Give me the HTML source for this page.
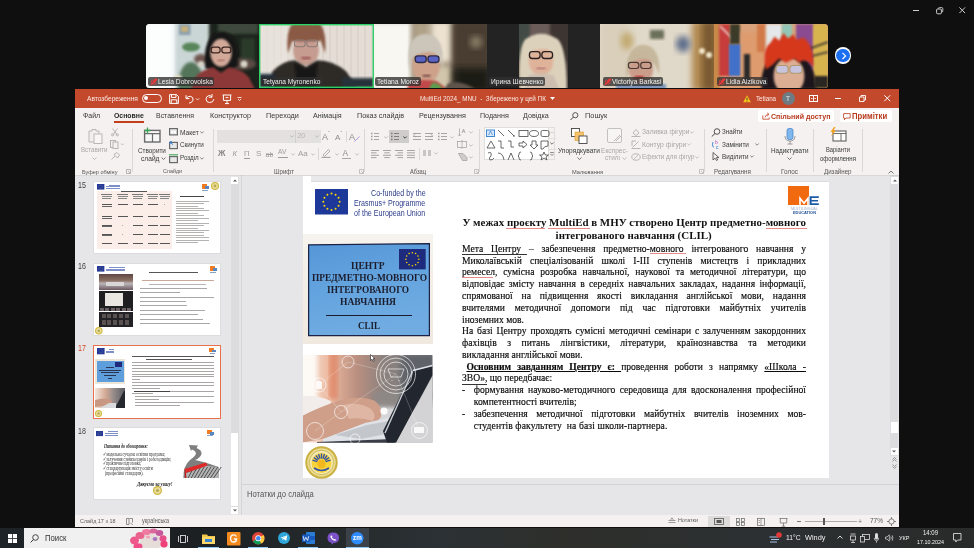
<!DOCTYPE html>
<html><head><meta charset="utf-8">
<style>
*{margin:0;padding:0;box-sizing:border-box}
html,body{width:974px;height:548px;overflow:hidden;background:#0f0f0f;font-family:"Liberation Sans",sans-serif;position:relative}
.a{position:absolute}
.t{position:absolute;white-space:pre;line-height:1}
svg{position:absolute;overflow:visible}
.sb{position:absolute;font-family:"Liberation Serif",serif;font-size:9.6px;line-height:9.6px;color:#0a0a0a;white-space:pre;-webkit-text-stroke:0.15px #0a0a0a}
.sb.j{white-space:normal;text-align:justify;text-align-last:justify;height:9.6px}
#wrap{position:absolute;left:0;top:0;width:974px;height:548px;overflow:hidden;filter:blur(0.3px)}

</style></head>
<body>
<div id="wrap">
<div class="a" style="left:912.8px;top:9.8px;width:5.8px;height:1.1px;background:#cfcfcf;"></div>
<svg style="left:935.5px;top:6.8px;" width="7.5" height="7.5" viewBox="0 0 7.5 7.5"><rect x="0.6" y="2" width="4.8" height="4.8" rx="1" stroke="#cfcfcf" stroke-width="1" fill="none"/><path d="M2.2 1.6 Q2.4 0.6 3.4 0.6 H5.8 Q6.8 0.6 6.8 1.6 V4 Q6.8 5 5.8 5.2" stroke="#cfcfcf" stroke-width="0.9" fill="none"/></svg>
<svg style="left:959px;top:7px;" width="6.5" height="6.5" viewBox="0 0 6.5 6.5"><path d="M0.4 0.4L6.1 6.1M6.1 0.4L0.4 6.1" stroke="#cfcfcf" stroke-width="1"/></svg>
<svg style="left:146px;top:24px;" width="682" height="64" viewBox="0 0 682 64"><defs><filter id="bl" x="-20%" y="-20%" width="140%" height="140%"><feGaussianBlur stdDeviation="1.6"/></filter><filter id="bl2" x="-20%" y="-20%" width="140%" height="140%"><feGaussianBlur stdDeviation="3"/></filter><filter id="bl1" x="-20%" y="-20%" width="140%" height="140%"><feGaussianBlur stdDeviation="0.8"/></filter><clipPath id="tc"><rect x="0" y="0" width="682" height="64" rx="3.5"/></clipPath><clipPath id="c1"><rect x="0" y="0" width="113" height="64"/></clipPath><clipPath id="c2"><rect x="113" y="0" width="115" height="64"/></clipPath><clipPath id="c3"><rect x="228" y="0" width="113" height="64"/></clipPath><clipPath id="c4"><rect x="373" y="0" width="49" height="64"/></clipPath><clipPath id="c5"><rect x="454" y="0" width="114" height="64"/></clipPath><clipPath id="c6"><rect x="568" y="0" width="114" height="64"/></clipPath></defs><g clip-path="url(#tc)"><g clip-path="url(#c1)"><rect x="0" y="0" width="113" height="64" fill="#c9d3d2"/><rect x="-4" y="-4" width="34" height="72" fill="#fcfefe" filter="url(#bl2)"/><rect x="30" y="-4" width="34" height="72" fill="#cad6d6" filter="url(#bl)"/><rect x="63" y="-4" width="54" height="72" fill="#1a241c" filter="url(#bl)"/><rect x="72" y="-2" width="40" height="12" fill="#3c4a3a" filter="url(#bl)"/><rect x="95" y="14" width="14" height="24" fill="#2c3a2a" filter="url(#bl)"/><rect x="33" y="0" width="11.5" height="11" fill="#8a9fb0" filter="url(#bl1)"/><rect x="35" y="2" width="7" height="6" fill="#c6b07a" filter="url(#bl1)"/><ellipse cx="45" cy="62" rx="13" ry="24" fill="#54745a" filter="url(#bl)"/><ellipse cx="45" cy="23" rx="9" ry="4.5" fill="#58865a" filter="url(#bl1)"/><ellipse cx="55" cy="35" rx="7" ry="5" fill="#6f5650" filter="url(#bl)"/><ellipse cx="32" cy="54" rx="4" ry="3" fill="#e8e0c8" filter="url(#bl1)"/><ellipse cx="96" cy="40" rx="14" ry="6" fill="#5a4b45" filter="url(#bl)"/><circle cx="98" cy="40" r="3.5" fill="#d8d4c6" filter="url(#bl1)"/><circle cx="55" cy="40" r="3" fill="#d8d4c6" filter="url(#bl1)"/><g transform="translate(75 40) scale(1.12) translate(-75 -40)"><path d="M61 44 Q58 14 75 11 Q92 12 90 42 Q84 46 75 44 Q66 46 61 44Z" fill="#151313" filter="url(#bl1)"/><ellipse cx="75" cy="30" rx="9.5" ry="12.5" fill="#d2a898" filter="url(#bl1)"/><rect x="66.2" y="25.0" width="8" height="5" rx="2.0" stroke="#3a2420" stroke-width="1.1" fill="none"/><rect x="75.8" y="25.0" width="8" height="5" rx="2.0" stroke="#3a2420" stroke-width="1.1" fill="none"/><rect x="72" y="36" width="6" height="1.2" fill="#9a5a58" filter="url(#bl1)"/><path d="M48 64 L52 52 Q58 45 68 43 L75 48 L82 43 Q94 45 100 52 L106 64 Z" fill="#8c3838" filter="url(#bl1)"/></g></g><g clip-path="url(#c2)"><rect x="113" y="0" width="115" height="64" fill="#e4ddd6"/><rect x="113" y="0" width="2" height="64" fill="#cdc4ba" opacity="0.3"/><rect x="120" y="0" width="2" height="64" fill="#cdc4ba" opacity="0.3"/><rect x="127" y="0" width="2" height="64" fill="#cdc4ba" opacity="0.3"/><rect x="134" y="0" width="2" height="64" fill="#cdc4ba" opacity="0.3"/><rect x="141" y="0" width="2" height="64" fill="#cdc4ba" opacity="0.3"/><rect x="148" y="0" width="2" height="64" fill="#cdc4ba" opacity="0.3"/><rect x="155" y="0" width="2" height="64" fill="#cdc4ba" opacity="0.3"/><rect x="162" y="0" width="2" height="64" fill="#cdc4ba" opacity="0.3"/><rect x="169" y="0" width="2" height="64" fill="#cdc4ba" opacity="0.3"/><rect x="176" y="0" width="2" height="64" fill="#cdc4ba" opacity="0.3"/><rect x="183" y="0" width="2" height="64" fill="#cdc4ba" opacity="0.3"/><rect x="190" y="0" width="2" height="64" fill="#cdc4ba" opacity="0.3"/><rect x="197" y="0" width="2" height="64" fill="#cdc4ba" opacity="0.3"/><rect x="204" y="0" width="2" height="64" fill="#cdc4ba" opacity="0.3"/><rect x="211" y="0" width="2" height="64" fill="#cdc4ba" opacity="0.3"/><rect x="218" y="0" width="2" height="64" fill="#cdc4ba" opacity="0.3"/><rect x="225" y="0" width="2" height="64" fill="#cdc4ba" opacity="0.3"/><rect x="113" y="-4" width="30" height="72" fill="#ebe6e0" filter="url(#bl)" opacity="0.6"/><g transform="translate(160 34) scale(1.12) translate(-160 -34)"><path d="M144 30 Q140 -2 160 -2 Q180 -2 177 30 L173 18 Q160 12 148 18Z" fill="#8a5a44" filter="url(#bl1)"/><ellipse cx="160" cy="27" rx="11.5" ry="14" fill="#c69c90" filter="url(#bl1)"/><rect x="147" y="11" width="26" height="8" fill="#8a5a44" filter="url(#bl1)"/><rect x="149.7" y="18.0" width="9.5" height="6" rx="2.4" stroke="#8b7a76" stroke-width="0.9" fill="none"/><rect x="160.8" y="18.0" width="9.5" height="6" rx="2.4" stroke="#8b7a76" stroke-width="0.9" fill="none"/><rect x="156" y="33" width="8" height="2.2" fill="#9c5454" filter="url(#bl1)"/><path d="M126 64 L130 46 Q140 36 150 36 L160 42 L170 36 Q184 36 196 46 L208 64 Z" fill="#2e2a28" filter="url(#bl1)"/><path d="M150 38 L160 44 L170 38 L168 64 L152 64Z" fill="#141212" filter="url(#bl1)"/></g><rect x="113" y="50" width="16" height="14" fill="#1f2a38" filter="url(#bl)"/><rect x="196" y="54" width="32" height="10" fill="#26303a" filter="url(#bl)"/><rect x="113.7" y="0.7" width="113.6" height="62.6" fill="none" stroke="#2fd067" stroke-width="1.4"/></g><g clip-path="url(#c3)"><rect x="228" y="0" width="113" height="64" fill="#5a4a3a"/><rect x="222" y="-4" width="46" height="72" fill="#f8f7f2" filter="url(#bl2)"/><rect x="266" y="-4" width="20" height="72" fill="#b0a288" filter="url(#bl2)"/><rect x="284" y="-4" width="24" height="44" fill="#ece2cf" filter="url(#bl2)"/><rect x="284" y="40" width="24" height="28" fill="#d2c6ac" filter="url(#bl2)"/><rect x="306" y="-4" width="40" height="72" fill="#4a3e30" filter="url(#bl2)"/><ellipse cx="330" cy="18" rx="6" ry="6" fill="#8a8068" filter="url(#bl2)"/><rect x="308" y="44" width="36" height="24" fill="#1e1a14" filter="url(#bl2)"/><g transform="translate(280 44) scale(1.1) translate(-280 -44)"><path d="M265 46 Q260 14 279 13 Q298 13 295 44 L292 34 Q280 26 268 34Z" fill="#cbc5ba" filter="url(#bl1)"/><ellipse cx="280" cy="42" rx="12.5" ry="16" fill="#cea28a" filter="url(#bl1)"/><path d="M266 32 Q272 18 292 26 L294 32 Q280 26 268 34Z" fill="#cbc5ba" filter="url(#bl1)"/><rect x="270.2" y="33.0" width="10" height="6" rx="2.4" stroke="#2b2a4a" stroke-width="1.2" fill="#5a62c4"/><rect x="281.8" y="33.0" width="10" height="6" rx="2.4" stroke="#2b2a4a" stroke-width="1.2" fill="#5a62c4"/><rect x="277" y="50" width="7" height="2" fill="#7a4a48" filter="url(#bl1)"/><path d="M262 64 L266 56 Q278 54 290 56 L300 64 Z" fill="#c24a4a" filter="url(#bl1)"/><path d="M282 64 L286 57 L292 59 L296 64Z" fill="#5aa050" filter="url(#bl1)"/><path d="M296 64 L300 58 Q312 54 326 64 Z" fill="#5e554c" filter="url(#bl1)"/></g></g><rect x="341" y="0" width="113" height="64" fill="#232323"/><g clip-path="url(#c4)"><rect x="373" y="0" width="49" height="64" fill="#4a403c"/><rect x="370" y="-3" width="16" height="40" fill="#424c44" filter="url(#bl)"/><rect x="384" y="-3" width="22" height="20" fill="#6a5c58" filter="url(#bl)"/><rect x="404" y="-3" width="22" height="40" fill="#3e3532" filter="url(#bl)"/><rect x="370" y="36" width="20" height="30" fill="#6a564c" filter="url(#bl)"/><g transform="translate(395 40) scale(1.12) translate(-395 -40)"><path d="M376 64 Q374 26 381 18 Q395 8 410 18 Q418 26 418 64Z" fill="#dcd2bc" filter="url(#bl1)"/><ellipse cx="395" cy="37" rx="11" ry="13.5" fill="#dfb29a" filter="url(#bl1)"/><path d="M382 30 Q385 16 395 16 Q407 16 410 30 Q398 23 382 30Z" fill="#dcd2bc" filter="url(#bl1)"/><rect x="384.7" y="28.9" width="9.5" height="6.2" rx="2.48" stroke="#2a201e" stroke-width="1.2" fill="none"/><rect x="395.8" y="28.9" width="9.5" height="6.2" rx="2.48" stroke="#2a201e" stroke-width="1.2" fill="none"/><rect x="391" y="43" width="8" height="1.6" fill="#b07070" filter="url(#bl1)"/><path d="M380 64 L384 50 Q395 47 406 50 L412 64 Z" fill="#cdbeb0" filter="url(#bl1)"/></g></g><g clip-path="url(#c5)"><rect x="454" y="0" width="114" height="64" fill="#e0d8c8"/><rect x="454" y="-3" width="30" height="70" fill="#d9cfbb" filter="url(#bl2)"/><rect x="546" y="-3" width="26" height="70" fill="#b08850" filter="url(#bl2)"/><rect x="556" y="-3" width="14" height="70" fill="#7a5a30" filter="url(#bl2)"/><ellipse cx="481" cy="17" rx="6.5" ry="9" fill="#c2aa72" filter="url(#bl2)"/><rect x="504" y="6" width="14" height="9" fill="#6b705a" filter="url(#bl)"/><ellipse cx="537" cy="20" rx="7" ry="8" fill="#5d6d8a" filter="url(#bl2)"/><circle cx="556" cy="27" r="3" fill="#f2e6c8" filter="url(#bl1)"/><circle cx="563" cy="31" r="3" fill="#f2e6c8" filter="url(#bl1)"/><g transform="translate(495 50) scale(1.22) translate(-495 -50)"><path d="M483 54 Q481 28 496 26 Q511 26 510 50 L506 42 Q495 36 487 42Z" fill="#c6b89c" filter="url(#bl1)"/><ellipse cx="495" cy="46" rx="10" ry="12" fill="#cc9c8a" filter="url(#bl1)"/><path d="M485 38 Q493 30 507 36 L507 40 Q495 34 485 42Z" fill="#c6b89c" filter="url(#bl1)"/><rect x="484.7" y="40.5" width="8.5" height="5" rx="2.0" stroke="#4a3a34" stroke-width="1" fill="none"/><rect x="494.8" y="40.5" width="8.5" height="5" rx="2.0" stroke="#4a3a34" stroke-width="1" fill="none"/><rect x="490" y="51.5" width="7" height="2.2" fill="#c03030" filter="url(#bl1)"/></g><rect x="470" y="60" width="50" height="5" fill="#7d96bd" filter="url(#bl1)"/></g><g clip-path="url(#c6)"><rect x="568" y="0" width="114" height="64" fill="#d9a27a"/><rect x="566" y="-3" width="8" height="70" fill="#c98a4a" filter="url(#bl1)"/><rect x="573" y="0" width="11" height="52" fill="#c63c3a" filter="url(#bl1)"/><path d="M574 2 L590 18" stroke="#f4f0e8" stroke-width="1.5" filter="url(#bl1)"/><rect x="583" y="20" width="12" height="32" fill="#3f70c8" filter="url(#bl1)"/><rect x="584" y="0" width="10" height="20" fill="#3a3a2a" filter="url(#bl1)"/><rect x="595" y="8" width="28" height="56" fill="#de9b6e" filter="url(#bl)"/><rect x="598" y="30" width="6" height="28" fill="#2a2a2a" filter="url(#bl1)"/><rect x="611" y="0" width="9" height="28" fill="#d27a48" filter="url(#bl1)"/><rect x="620" y="0" width="16" height="36" fill="#e4e8ea" filter="url(#bl)"/><rect x="636" y="0" width="10" height="16" fill="#92c6b6" filter="url(#bl1)"/><rect x="650" y="0" width="18" height="52" fill="#8a4c90" filter="url(#bl1)"/><rect x="667" y="0" width="15" height="64" fill="#d8b450" filter="url(#bl1)"/><path d="M660 26 L682 18 M658 34 L682 28" stroke="#2a2a2a" stroke-width="1.5" filter="url(#bl1)"/><g transform="translate(643 52) scale(1.1) translate(-643 -52)"><path d="M618 64 Q616 34 640 30 Q666 30 668 64Z" fill="#1a181a" filter="url(#bl1)"/><ellipse cx="643" cy="52" rx="14" ry="17" fill="#dcae94" filter="url(#bl1)"/><path d="M622 46 Q618 28 626 22 L630 16 L634 20 L638 13 L642 18 L647 14 L650 19 L656 17 Q666 24 665 44 L662 40 Q656 36 652 40 L648 36 L640 40 L634 36 L628 42 Z" fill="#d6391f" filter="url(#bl1)"/><rect x="631.2" y="42.5" width="11" height="7" rx="2.8" stroke="#b09a70" stroke-width="1" fill="#c8c4e0"/><rect x="643.8" y="42.5" width="11" height="7" rx="2.8" stroke="#b09a70" stroke-width="1" fill="#c8c4e0"/></g><rect x="668" y="52" width="14" height="12" fill="#2a2624" filter="url(#bl1)"/></g></g></svg>
<div class="a" style="left:148.3px;top:77.1px;width:65.69999999999999px;height:8.6px;background:rgba(48,48,48,0.78);border-radius:2px"></div>
<svg style="left:149.8px;top:77.9px;" width="8" height="7.5" viewBox="0 0 8 7.5"><g transform="rotate(38 4 3.6)"><rect x="2.7" y="0.2" width="2.8" height="4.6" rx="1.4" fill="#e5393b"/><path d="M1.5 3.2 Q1.5 6 4.1 6 Q6.7 6 6.7 3.2 M4.1 6 V7.4" stroke="#e5393b" stroke-width="0.9" fill="none"/></g><path d="M0.6 7 L7.4 0.4" stroke="#e5393b" stroke-width="1.1"/></svg>
<div class="t " style="left:157.50px;top:77.99px;font-size:8.023px;color:#f0f0f0;font-weight:normal;font-family:'Liberation Sans';transform:scaleX(0.8333);transform-origin:0 0;">Lesia Dobrovolska</div>
<div class="a" style="left:261.3px;top:77.1px;width:61.69999999999999px;height:8.6px;background:rgba(48,48,48,0.78);border-radius:2px"></div>
<div class="t " style="left:263.00px;top:78.05px;font-size:7.906px;color:#f0f0f0;font-weight:normal;font-family:'Liberation Sans';transform:scaleX(0.8333);transform-origin:0 0;">Tetyana Myronenko</div>
<div class="a" style="left:375.3px;top:77.1px;width:45.69999999999999px;height:8.6px;background:rgba(48,48,48,0.78);border-radius:2px"></div>
<div class="t " style="left:377.00px;top:77.99px;font-size:8.024px;color:#f0f0f0;font-weight:normal;font-family:'Liberation Sans';transform:scaleX(0.8333);transform-origin:0 0;">Tetiana Moroz</div>
<div class="a" style="left:488.7px;top:77.1px;width:56.00000000000006px;height:8.6px;background:rgba(48,48,48,0.78);border-radius:2px"></div>
<div class="t " style="left:490.50px;top:77.97px;font-size:8.063px;color:#f0f0f0;font-weight:normal;font-family:'Liberation Sans';transform:scaleX(0.8333);transform-origin:0 0;">Ирина Шевченко</div>
<div class="a" style="left:602.6px;top:77.1px;width:60.39999999999998px;height:8.6px;background:rgba(48,48,48,0.78);border-radius:2px"></div>
<svg style="left:604.1px;top:77.9px;" width="8" height="7.5" viewBox="0 0 8 7.5"><g transform="rotate(38 4 3.6)"><rect x="2.7" y="0.2" width="2.8" height="4.6" rx="1.4" fill="#e5393b"/><path d="M1.5 3.2 Q1.5 6 4.1 6 Q6.7 6 6.7 3.2 M4.1 6 V7.4" stroke="#e5393b" stroke-width="0.9" fill="none"/></g><path d="M0.6 7 L7.4 0.4" stroke="#e5393b" stroke-width="1.1"/></svg>
<div class="t " style="left:612.00px;top:78.00px;font-size:7.996px;color:#f0f0f0;font-weight:normal;font-family:'Liberation Sans';transform:scaleX(0.8333);transform-origin:0 0;">Victoriya Barkasi</div>
<div class="a" style="left:716.5px;top:77.1px;width:51.5px;height:8.6px;background:rgba(48,48,48,0.78);border-radius:2px"></div>
<svg style="left:718.0px;top:77.9px;" width="8" height="7.5" viewBox="0 0 8 7.5"><g transform="rotate(38 4 3.6)"><rect x="2.7" y="0.2" width="2.8" height="4.6" rx="1.4" fill="#e5393b"/><path d="M1.5 3.2 Q1.5 6 4.1 6 Q6.7 6 6.7 3.2 M4.1 6 V7.4" stroke="#e5393b" stroke-width="0.9" fill="none"/></g><path d="M0.6 7 L7.4 0.4" stroke="#e5393b" stroke-width="1.1"/></svg>
<div class="t " style="left:725.50px;top:77.99px;font-size:8.021px;color:#f0f0f0;font-weight:normal;font-family:'Liberation Sans';transform:scaleX(0.8333);transform-origin:0 0;">Lidia Aizikova</div>
<div class="a" style="left:834.8px;top:47.2px;width:16.4px;height:16.4px;border-radius:50%;background:#fff"></div>
<div class="a" style="left:836.3px;top:48.7px;width:13.4px;height:13.4px;border-radius:50%;background:#1b6ff0"></div>
<svg style="left:840.5px;top:51.5px;" width="6" height="8" viewBox="0 0 6 8"><path d="M1.5 0.8L4.6 3.9L1.5 7" stroke="#fff" stroke-width="1.2" fill="none"/></svg>
<div class="a" style="left:75px;top:89px;width:824px;height:18.5px;background:#c2492b;"></div>
<div class="t " style="left:87.00px;top:94.96px;font-size:7.281px;color:#fbe9e4;font-weight:normal;font-family:'Liberation Sans';transform:scaleX(0.9091);transform-origin:0 0;">Автозбереження</div>
<div class="a" style="left:141.5px;top:94px;width:20.5px;height:8.5px;border:1px solid #fff;border-radius:5px"></div>
<div class="a" style="left:144px;top:96.3px;width:4px;height:4px;border-radius:50%;background:#fff"></div>
<svg style="left:169px;top:93.5px;" width="10" height="10" viewBox="0 0 10 10"><path d="M0.6 0.6H7.6L9.4 2.4V9.4H0.6Z M2.5 0.6V3.4H7V0.6 M2.2 9.4V5.8H7.8V9.4" stroke="#fff" stroke-width="1" fill="none"/></svg>
<svg style="left:184px;top:93.5px;" width="16" height="10" viewBox="0 0 16 10"><path d="M2 1.2V4.6H5.4 M2.2 4.4 Q4 1.8 6.8 2.4 Q9.6 3.2 9 6.2 Q8.4 8.6 5 9.2" stroke="#fff" stroke-width="1" fill="none"/><path d="M12 4.4L13.6 6L15.2 4.4" stroke="#fff" stroke-width="0.8" fill="none"/></svg>
<svg style="left:204.5px;top:93px;" width="10" height="11" viewBox="0 0 10 11"><path d="M7 1V4.2H3.8 M6.8 3.8 Q5.4 2.2 3.8 2.6 Q1 3.4 1 6.2 Q1.2 9.4 4.6 9.6 Q8.4 9.6 8.8 6.2" stroke="#fff" stroke-width="1" fill="none"/></svg>
<svg style="left:222px;top:93.5px;" width="10" height="10" viewBox="0 0 10 10"><path d="M0.6 1H9.4 M1.4 1V6.4H8.6V1 M5 6.4V9.6 M3 9.6H7 M3.6 3.6H6.4" stroke="#fff" stroke-width="1" fill="none"/></svg>
<svg style="left:237px;top:96.5px;" width="5" height="4" viewBox="0 0 5 4"><path d="M0.5 0.5H4.5 M1 2L2.5 3.5L4 2" stroke="#fff" stroke-width="0.8" fill="none"/></svg>
<div class="t " style="left:420.20px;top:94.91px;font-size:6.984px;color:#fbe9e4;font-weight:normal;font-family:'Liberation Sans';transform:scaleX(0.9091);transform-origin:0 0;">MultiEd 2024_ MNU  -  Збережено у цей ПК</div>
<svg style="left:550px;top:96.8px;" width="5" height="3" viewBox="0 0 5 3"><path d="M0 0H5L2.5 3Z" fill="#fff"/></svg>
<svg style="left:743px;top:94.5px;" width="8" height="7.5" viewBox="0 0 8 7.5"><path d="M4 0.3L7.8 7.2H0.2Z" fill="#f8c21c"/><path d="M4 2.6V5 M4 5.8V6.6" stroke="#333" stroke-width="0.9"/></svg>
<div class="t " style="left:755.70px;top:95.92px;font-size:7.168px;color:#fbeae6;font-weight:normal;font-family:'Liberation Sans';transform:scaleX(0.8696);transform-origin:0 0;">Tetiana</div>
<div class="a" style="left:781.5px;top:92px;width:13px;height:13px;border-radius:50%;background:#6d7c84"></div>
<div class="t " style="left:786.00px;top:95.65px;font-size:6.500px;color:#e8eef2;font-weight:normal;font-family:'Liberation Sans';">T</div>
<svg style="left:809px;top:95px;" width="9" height="7" viewBox="0 0 9 7"><rect x="0.5" y="0.5" width="8" height="6" stroke="#fff" stroke-width="1" fill="none"/><path d="M4.5 0.5V6.5 M2 3.5H3.5 M5.5 3.5H7" stroke="#fff" stroke-width="0.9"/></svg>
<div class="a" style="left:834.6px;top:98.3px;width:6.4px;height:1px;background:#fff;"></div>
<svg style="left:858.5px;top:94.8px;" width="7" height="7" viewBox="0 0 7 7"><path d="M0.5 2H5V6.5H0.5Z M2 2V0.5H6.5V5H5" stroke="#fff" stroke-width="0.9" fill="none"/></svg>
<svg style="left:883.8px;top:95.2px;" width="6.5" height="6.5" viewBox="0 0 6.5 6.5"><path d="M0.3 0.3L6.2 6.2M6.2 0.3L0.3 6.2" stroke="#fff" stroke-width="1"/></svg>
<div class="a" style="left:75px;top:107.5px;width:824px;height:17px;background:#f4f1f0;"></div>
<div class="t " style="left:82.80px;top:112.35px;font-size:7.695px;color:#3a3a3a;font-weight:normal;font-family:'Liberation Sans';transform:scaleX(0.9091);transform-origin:0 0;">Файл</div>
<div class="t " style="left:114.00px;top:112.41px;font-size:7.581px;color:#262626;font-weight:bold;font-family:'Liberation Sans';transform:scaleX(0.9091);transform-origin:0 0;">Основне</div>
<div class="a" style="left:113.7px;top:121.4px;width:30.3px;height:1.6px;background:#c43e1c;"></div>
<div class="t " style="left:156.00px;top:112.37px;font-size:7.650px;color:#3a3a3a;font-weight:normal;font-family:'Liberation Sans';transform:scaleX(0.9091);transform-origin:0 0;">Вставлення</div>
<div class="t " style="left:209.50px;top:112.24px;font-size:7.929px;color:#3a3a3a;font-weight:normal;font-family:'Liberation Sans';transform:scaleX(0.9091);transform-origin:0 0;">Конструктор</div>
<div class="t " style="left:266.00px;top:112.21px;font-size:7.988px;color:#3a3a3a;font-weight:normal;font-family:'Liberation Sans';transform:scaleX(0.9091);transform-origin:0 0;">Переходи</div>
<div class="t " style="left:313.20px;top:112.26px;font-size:7.878px;color:#3a3a3a;font-weight:normal;font-family:'Liberation Sans';transform:scaleX(0.9091);transform-origin:0 0;">Анімація</div>
<div class="t " style="left:357.30px;top:112.24px;font-size:7.926px;color:#3a3a3a;font-weight:normal;font-family:'Liberation Sans';transform:scaleX(0.9091);transform-origin:0 0;">Показ слайдів</div>
<div class="t " style="left:419.00px;top:112.24px;font-size:7.914px;color:#3a3a3a;font-weight:normal;font-family:'Liberation Sans';transform:scaleX(0.9091);transform-origin:0 0;">Рецензування</div>
<div class="t " style="left:479.80px;top:112.28px;font-size:7.844px;color:#3a3a3a;font-weight:normal;font-family:'Liberation Sans';transform:scaleX(0.9091);transform-origin:0 0;">Подання</div>
<div class="t " style="left:523.00px;top:112.26px;font-size:7.889px;color:#3a3a3a;font-weight:normal;font-family:'Liberation Sans';transform:scaleX(0.9091);transform-origin:0 0;">Довідка</div>
<svg style="left:569.8px;top:112px;" width="8.5" height="8.5" viewBox="0 0 8.5 8.5"><circle cx="5.3" cy="3.2" r="2.6" stroke="#444" stroke-width="0.9" fill="none"/><path d="M3.4 5.1L0.5 8" stroke="#444" stroke-width="1"/></svg>
<div class="t " style="left:584.60px;top:112.15px;font-size:8.100px;color:#3a3a3a;font-weight:normal;font-family:'Liberation Sans';transform:scaleX(0.9091);transform-origin:0 0;">Пошук</div>
<div class="a" style="left:758px;top:109.9px;width:76px;height:11.7px;background:#fff;border-radius:2px"></div>
<svg style="left:761.5px;top:112px;" width="8" height="8" viewBox="0 0 8 8"><path d="M0.8 3.4V7.2H7.2V5.4 M3 5.4Q3.4 2.6 6.6 2.4 M5.2 0.8L7 2.4L5.2 4" stroke="#c43e1c" stroke-width="0.8" fill="none"/></svg>
<div class="t " style="left:771.00px;top:112.72px;font-size:7.765px;color:#b8391c;font-weight:bold;font-family:'Liberation Sans';transform:scaleX(0.9091);transform-origin:0 0;">Спільний доступ</div>
<div class="a" style="left:839.6px;top:109.9px;width:52.5px;height:11.7px;background:#fff;border-radius:2px"></div>
<svg style="left:843px;top:112.5px;" width="8" height="7.5" viewBox="0 0 8 7.5"><path d="M0.6 0.6H7.2V5H3L1.4 6.8V5H0.6Z" stroke="#b8391c" stroke-width="0.8" fill="none"/></svg>
<div class="t " style="left:852.30px;top:112.36px;font-size:8.478px;color:#b8391c;font-weight:bold;font-family:'Liberation Sans';transform:scaleX(0.9091);transform-origin:0 0;">Примітки</div>
<div class="a" style="left:75px;top:124.5px;width:824px;height:50.3px;background:#f4f1f0;"></div>
<div class="a" style="left:75px;top:174.6px;width:824px;height:0.8px;background:#d8d6d4;"></div>
<div class="a" style="left:132px;top:129px;width:0.8px;height:43px;background:#dad8d6;"></div>
<div class="a" style="left:212.5px;top:129px;width:0.8px;height:43px;background:#dad8d6;"></div>
<div class="a" style="left:364.4px;top:129px;width:0.8px;height:43px;background:#dad8d6;"></div>
<div class="a" style="left:479px;top:129px;width:0.8px;height:43px;background:#dad8d6;"></div>
<div class="a" style="left:704px;top:129px;width:0.8px;height:43px;background:#dad8d6;"></div>
<div class="a" style="left:765.7px;top:129px;width:0.8px;height:43px;background:#dad8d6;"></div>
<div class="a" style="left:813.3px;top:129px;width:0.8px;height:43px;background:#dad8d6;"></div>
<div class="a" style="left:862px;top:129px;width:0.8px;height:43px;background:#dad8d6;"></div>
<svg style="left:86.5px;top:127.5px;" width="16" height="16" viewBox="0 0 16 16"><path d="M2 3H5V1.5H9V3H12V14H2Z" stroke="#b9b7b5" stroke-width="1" fill="#f0efee"/><rect x="7" y="6" width="8" height="9.5" stroke="#b9b7b5" stroke-width="1" fill="#f7f6f5"/></svg>
<div class="t " style="left:80.50px;top:147.19px;font-size:6.816px;color:#a9a7a5;font-weight:normal;font-family:'Liberation Sans';transform:scaleX(0.9091);transform-origin:0 0;">Вставити</div>
<svg style="left:92.3px;top:156.5px;" width="5" height="3" viewBox="0 0 5 3"><path d="M0.5 0.5L2.5 2.5L4.5 0.5" stroke="#b0aeac" stroke-width="0.8" fill="none"/></svg>
<svg style="left:111px;top:128px;" width="8" height="8" viewBox="0 0 8 8"><path d="M1.5 0.5L6.5 7.5M6.5 0.5L1.5 7.5" stroke="#b0aeac" stroke-width="0.9" fill="none"/><circle cx="1.6" cy="6.8" r="1.2" stroke="#b0aeac" stroke-width="0.7" fill="none"/><circle cx="6.4" cy="6.8" r="1.2" stroke="#b0aeac" stroke-width="0.7" fill="none"/></svg>
<svg style="left:110px;top:139.5px;" width="15" height="9" viewBox="0 0 15 9"><rect x="0.5" y="0.5" width="5" height="7" stroke="#b0aeac" stroke-width="0.9" fill="none"/><rect x="3" y="2" width="5" height="6.5" stroke="#b0aeac" stroke-width="0.9" fill="#f3f2f1"/><path d="M11 3.5L12.5 5L14 3.5" stroke="#b0aeac" stroke-width="0.7" fill="none"/></svg>
<svg style="left:110.5px;top:151.5px;" width="9" height="8" viewBox="0 0 9 8"><path d="M0.5 7.5L4 4 M3 2.5L6 0.5L8.5 3L6.5 6Z" stroke="#b0aeac" stroke-width="0.9" fill="none"/></svg>
<div class="t " style="left:81.50px;top:168.95px;font-size:6.097px;color:#555555;font-weight:normal;font-family:'Liberation Sans';transform:scaleX(0.9091);transform-origin:0 0;">Буфер обміну</div>
<svg style="left:126px;top:168.5px;" width="5" height="5" viewBox="0 0 5 5"><path d="M0.5 0.5H4.5V4.5H0.5Z M2 2L4.3 4.3" stroke="#8d8b89" stroke-width="0.6" fill="none"/></svg>
<svg style="left:143px;top:126.5px;" width="18" height="16" viewBox="0 0 18 16"><rect x="1.6" y="3.4" width="15.4" height="11.6" stroke="#6a6a6a" stroke-width="1.4" fill="#f7f7f7"/><path d="M1.6 6.6H17 M9.5 6.6V15" stroke="#6a6a6a" stroke-width="1.2"/><path d="M4.5 0.5V6.5 M1.5 3.5H7.5" stroke="#3aa655" stroke-width="1.3"/></svg>
<div class="t " style="left:138.00px;top:147.09px;font-size:7.019px;color:#3a3a3a;font-weight:normal;font-family:'Liberation Sans';transform:scaleX(0.9091);transform-origin:0 0;">Створити</div>
<div class="t " style="left:140.50px;top:155.34px;font-size:7.315px;color:#3a3a3a;font-weight:normal;font-family:'Liberation Sans';transform:scaleX(0.9091);transform-origin:0 0;">слайд</div>
<svg style="left:160.5px;top:157.3px;" width="5" height="3" viewBox="0 0 5 3"><path d="M0.5 0.5L2.5 2.5L4.5 0.5" stroke="#555" stroke-width="0.8" fill="none"/></svg>
<svg style="left:169px;top:128.3px;" width="9" height="7.5" viewBox="0 0 9 7.5"><rect x="0.6" y="0.6" width="7.8" height="6.3" stroke="#6a6a6a" stroke-width="1.2" fill="#e8e8e8"/><rect x="2" y="3" width="2.2" height="2.2" fill="#fff"/><rect x="4.8" y="3" width="2.2" height="2.2" fill="#fff"/></svg>
<div class="t " style="left:179.70px;top:128.75px;font-size:7.307px;color:#3a3a3a;font-weight:normal;font-family:'Liberation Sans';transform:scaleX(0.9091);transform-origin:0 0;">Макет</div>
<svg style="left:200px;top:131.3px;" width="4" height="3" viewBox="0 0 4 3"><path d="M0.3 0.5L2 2.2L3.7 0.5" stroke="#555" stroke-width="0.7" fill="none"/></svg>
<svg style="left:169px;top:140.8px;" width="9" height="8" viewBox="0 0 9 8"><rect x="0.6" y="1.4" width="7.8" height="6.2" stroke="#6a6a6a" stroke-width="1.2" fill="#e8e8e8"/><path d="M1.2 1.2L4 3.6 M1 0.8V2.8 M1 0.8H3" stroke="#2a7ad1" stroke-width="1" fill="none"/></svg>
<div class="t " style="left:179.70px;top:142.14px;font-size:6.913px;color:#3a3a3a;font-weight:normal;font-family:'Liberation Sans';transform:scaleX(0.9091);transform-origin:0 0;">Скинути</div>
<svg style="left:169px;top:154px;" width="9" height="9" viewBox="0 0 9 9"><rect x="0.6" y="2.6" width="7.8" height="6" stroke="#6a6a6a" stroke-width="1.2" fill="#e8e8e8"/><path d="M0 0.8H9" stroke="#3aa655" stroke-width="1.1"/></svg>
<div class="t " style="left:179.70px;top:155.45px;font-size:6.908px;color:#3a3a3a;font-weight:normal;font-family:'Liberation Sans';transform:scaleX(0.9091);transform-origin:0 0;">Розділ</div>
<svg style="left:200px;top:157px;" width="4" height="3" viewBox="0 0 4 3"><path d="M0.3 0.5L2 2.2L3.7 0.5" stroke="#555" stroke-width="0.7" fill="none"/></svg>
<div class="t " style="left:163.00px;top:169.07px;font-size:5.867px;color:#555555;font-weight:normal;font-family:'Liberation Sans';transform:scaleX(0.9091);transform-origin:0 0;">Слайди</div>
<div class="a" style="left:216.6px;top:130px;width:79px;height:12.7px;background:#e2e1e0;"></div>
<div class="a" style="left:296px;top:130px;width:24.6px;height:12.7px;background:#e2e1e0;"></div>
<div class="a" style="left:295.4px;top:130px;width:0.8px;height:12.7px;background:#d0cfce;"></div>
<svg style="left:290px;top:135.3px;" width="4" height="3" viewBox="0 0 4 3"><path d="M0.3 0.5L2 2.2L3.7 0.5" stroke="#aaa" stroke-width="0.7" fill="none"/></svg>
<div class="t " style="left:297.50px;top:133.40px;font-size:6.800px;color:#b5b3b1;font-weight:normal;font-family:'Liberation Sans';">20</div>
<svg style="left:315px;top:135.3px;" width="4" height="3" viewBox="0 0 4 3"><path d="M0.3 0.5L2 2.2L3.7 0.5" stroke="#aaa" stroke-width="0.7" fill="none"/></svg>
<div class="t " style="left:322.00px;top:132.50px;font-size:9.000px;color:#8e8c8a;font-weight:normal;font-family:'Liberation Sans';">A</div>
<div class="t " style="left:328.00px;top:131.40px;font-size:5.000px;color:#8e8c8a;font-weight:normal;font-family:'Liberation Sans';">ˆ</div>
<div class="t " style="left:335.00px;top:133.70px;font-size:8.000px;color:#8e8c8a;font-weight:normal;font-family:'Liberation Sans';">A</div>
<div class="t " style="left:340.60px;top:131.40px;font-size:5.000px;color:#8e8c8a;font-weight:normal;font-family:'Liberation Sans';">ˇ</div>
<div class="a" style="left:346px;top:131px;width:0.7px;height:11px;background:#dad8d6;"></div>
<div class="t " style="left:349.00px;top:132.50px;font-size:9.000px;color:#8e8c8a;font-weight:normal;font-family:'Liberation Sans';">A</div>
<svg style="left:354px;top:136px;" width="6" height="6" viewBox="0 0 6 6"><path d="M0.5 5.5L3 3L5.5 0.5" stroke="#a57dd6" stroke-width="0.8" fill="none"/></svg>
<div class="t " style="left:218.00px;top:150.00px;font-size:8.200px;color:#8a8886;font-weight:bold;font-family:'Liberation Sans';">Ж</div>
<div class="t " style="left:232.50px;top:150.30px;font-size:7.600px;color:#9e9c9a;font-weight:normal;font-family:'Liberation Sans';font-style:italic;">К</div>
<div class="t " style="left:244.00px;top:150.30px;font-size:7.600px;color:#9e9c9a;font-weight:normal;font-family:'Liberation Sans';">П</div>
<div class="a" style="left:244px;top:157.8px;width:5.5px;height:0.7px;background:#9e9c9a;"></div>
<div class="t " style="left:256.00px;top:150.10px;font-size:8.000px;color:#9e9c9a;font-weight:normal;font-family:'Liberation Sans';">S</div>
<div class="t " style="left:265.50px;top:151.10px;font-size:7.000px;color:#9e9c9a;font-weight:normal;font-family:'Liberation Sans';">ab</div>
<div class="a" style="left:265.5px;top:154.2px;width:7.5px;height:0.7px;background:#9e9c9a;"></div>
<div class="t " style="left:278.00px;top:149.30px;font-size:6.600px;color:#9e9c9a;font-weight:normal;font-family:'Liberation Sans';">AV</div>
<div class="a" style="left:278px;top:157.2px;width:10px;height:0.6px;background:#9e9c9a;"></div>
<svg style="left:290.5px;top:153.2px;" width="4" height="3" viewBox="0 0 4 3"><path d="M0.3 0.5L2 2.2L3.7 0.5" stroke="#aaa" stroke-width="0.7" fill="none"/></svg>
<div class="t " style="left:298.00px;top:150.10px;font-size:8.000px;color:#9e9c9a;font-weight:normal;font-family:'Liberation Sans';">Aa</div>
<svg style="left:310.5px;top:153.2px;" width="4" height="3" viewBox="0 0 4 3"><path d="M0.3 0.5L2 2.2L3.7 0.5" stroke="#aaa" stroke-width="0.7" fill="none"/></svg>
<div class="a" style="left:318px;top:148px;width:0.7px;height:12px;background:#dad8d6;"></div>
<svg style="left:321px;top:148px;" width="10" height="10" viewBox="0 0 10 10"><path d="M2 7L7.5 1.5L9 3L3.5 8.5Z" stroke="#9e9c9a" stroke-width="0.8" fill="none"/><rect x="0.5" y="8.8" width="9" height="1.2" fill="#a9a7a5"/></svg>
<svg style="left:335px;top:153.2px;" width="4" height="3" viewBox="0 0 4 3"><path d="M0.3 0.5L2 2.2L3.7 0.5" stroke="#aaa" stroke-width="0.7" fill="none"/></svg>
<div class="t " style="left:342.50px;top:149.20px;font-size:8.400px;color:#8e8c8a;font-weight:normal;font-family:'Liberation Sans';">A</div>
<div class="a" style="left:342px;top:158px;width:9px;height:1.2px;background:#a9a7a5;"></div>
<svg style="left:355px;top:153.2px;" width="4" height="3" viewBox="0 0 4 3"><path d="M0.3 0.5L2 2.2L3.7 0.5" stroke="#aaa" stroke-width="0.7" fill="none"/></svg>
<div class="t " style="left:274.00px;top:168.66px;font-size:6.687px;color:#555555;font-weight:normal;font-family:'Liberation Sans';transform:scaleX(0.9091);transform-origin:0 0;">Шрифт</div>
<svg style="left:358.5px;top:168.5px;" width="5" height="5" viewBox="0 0 5 5"><path d="M0.5 0.5H4.5V4.5H0.5Z M2 2L4.3 4.3" stroke="#a3a19f" stroke-width="0.6" fill="none"/></svg>
<svg style="left:371px;top:132.5px;" width="8" height="9" viewBox="0 0 8 9"><rect x="3" y="0" width="5" height="0.9" fill="#9e9c9a"/><rect x="0" y="-0.3" width="1.5" height="1.5" fill="#9e9c9a"/><rect x="3" y="3" width="5" height="0.9" fill="#9e9c9a"/><rect x="0" y="2.7" width="1.5" height="1.5" fill="#9e9c9a"/><rect x="3" y="6" width="5" height="0.9" fill="#9e9c9a"/><rect x="0" y="5.7" width="1.5" height="1.5" fill="#9e9c9a"/></svg>
<svg style="left:383.5px;top:135.5px;" width="4" height="3" viewBox="0 0 4 3"><path d="M0.3 0.5L2 2.2L3.7 0.5" stroke="#aaa" stroke-width="0.7" fill="none"/></svg>
<div class="a" style="left:389px;top:130.4px;width:20px;height:12.3px;background:#cfcdcb;"></div>
<svg style="left:391px;top:132.5px;" width="8" height="9" viewBox="0 0 8 9"><rect x="3" y="0" width="5" height="0.9" fill="#7a7876"/><rect x="0" y="-0.3" width="1.5" height="1.5" fill="#7a7876"/><rect x="3" y="3" width="5" height="0.9" fill="#7a7876"/><rect x="0" y="2.7" width="1.5" height="1.5" fill="#7a7876"/><rect x="3" y="6" width="5" height="0.9" fill="#7a7876"/><rect x="0" y="5.7" width="1.5" height="1.5" fill="#7a7876"/></svg>
<svg style="left:403px;top:135.5px;" width="4" height="3" viewBox="0 0 4 3"><path d="M0.3 0.5L2 2.2L3.7 0.5" stroke="#333" stroke-width="0.9" fill="none"/></svg>
<svg style="left:413px;top:132.5px;" width="8" height="9" viewBox="0 0 8 9"><rect x="0" y="0" width="8" height="0.9" fill="#9e9c9a"/><rect x="0" y="3" width="8" height="0.9" fill="#9e9c9a"/><rect x="0" y="6" width="8" height="0.9" fill="#9e9c9a"/></svg>
<svg style="left:425px;top:132.5px;" width="8" height="9" viewBox="0 0 8 9"><rect x="0" y="0" width="8" height="0.9" fill="#9e9c9a"/><rect x="0" y="3" width="8" height="0.9" fill="#9e9c9a"/><rect x="0" y="6" width="8" height="0.9" fill="#9e9c9a"/></svg>
<svg style="left:413px;top:134px;" width="3" height="3" viewBox="0 0 3 3"><path d="M2.5 0L0.5 1.5L2.5 3" stroke="#9e9c9a" stroke-width="0.6" fill="none"/></svg>
<svg style="left:429.5px;top:134px;" width="3" height="3" viewBox="0 0 3 3"><path d="M0.5 0L2.5 1.5L0.5 3" stroke="#9e9c9a" stroke-width="0.6" fill="none"/></svg>
<svg style="left:438px;top:132.5px;" width="9" height="9" viewBox="0 0 9 9"><rect x="3" y="0" width="6" height="0.9" fill="#9e9c9a"/><rect x="0" y="-0.3" width="1.5" height="1.5" fill="#9e9c9a"/><rect x="3" y="3" width="6" height="0.9" fill="#9e9c9a"/><rect x="0" y="2.7" width="1.5" height="1.5" fill="#9e9c9a"/><rect x="3" y="6" width="6" height="0.9" fill="#9e9c9a"/><rect x="0" y="5.7" width="1.5" height="1.5" fill="#9e9c9a"/></svg>
<svg style="left:450px;top:135.5px;" width="4" height="3" viewBox="0 0 4 3"><path d="M0.3 0.5L2 2.2L3.7 0.5" stroke="#aaa" stroke-width="0.7" fill="none"/></svg>
<svg style="left:458px;top:127.5px;" width="9" height="9" viewBox="0 0 9 9"><path d="M1.5 0.5V8 M0 6.5L1.5 8L3 6.5 M5.5 1L7 5 M5.5 1L4 5 M4.5 3.5H6.5" stroke="#9e9c9a" stroke-width="0.7" fill="none"/></svg>
<svg style="left:469px;top:131px;" width="4" height="3" viewBox="0 0 4 3"><path d="M0.3 0.5L2 2.2L3.7 0.5" stroke="#aaa" stroke-width="0.7" fill="none"/></svg>
<svg style="left:457px;top:140px;" width="10" height="9" viewBox="0 0 10 9"><rect x="0.5" y="1.5" width="9" height="6" stroke="#9e9c9a" stroke-width="0.7" fill="none"/><path d="M5 0V9" stroke="#9e9c9a" stroke-width="0.6"/></svg>
<svg style="left:469px;top:144px;" width="4" height="3" viewBox="0 0 4 3"><path d="M0.3 0.5L2 2.2L3.7 0.5" stroke="#aaa" stroke-width="0.7" fill="none"/></svg>
<svg style="left:458px;top:152.5px;" width="10" height="8" viewBox="0 0 10 8"><path d="M0.5 0.5H5L9 4.5V7.5H4.5Z" stroke="#9e9c9a" stroke-width="0.7" fill="#cfcdcb"/></svg>
<svg style="left:469px;top:156px;" width="4" height="3" viewBox="0 0 4 3"><path d="M0.3 0.5L2 2.2L3.7 0.5" stroke="#aaa" stroke-width="0.7" fill="none"/></svg>
<svg style="left:371px;top:150px;" width="8" height="9.6" viewBox="0 0 8 9.6"><rect x="0" y="0.0" width="8" height="0.9" fill="#9e9c9a"/><rect x="0" y="2.4" width="5.5" height="0.9" fill="#9e9c9a"/><rect x="0" y="4.8" width="8" height="0.9" fill="#9e9c9a"/><rect x="0" y="7.199999999999999" width="5.5" height="0.9" fill="#9e9c9a"/></svg>
<svg style="left:383px;top:150px;" width="8" height="9.6" viewBox="0 0 8 9.6"><rect x="0.0" y="0.0" width="8" height="0.9" fill="#9e9c9a"/><rect x="1.25" y="2.4" width="5.5" height="0.9" fill="#9e9c9a"/><rect x="0.0" y="4.8" width="8" height="0.9" fill="#9e9c9a"/><rect x="1.25" y="7.199999999999999" width="5.5" height="0.9" fill="#9e9c9a"/></svg>
<svg style="left:395px;top:150px;" width="8" height="9.6" viewBox="0 0 8 9.6"><rect x="0" y="0.0" width="8" height="0.9" fill="#9e9c9a"/><rect x="2.5" y="2.4" width="5.5" height="0.9" fill="#9e9c9a"/><rect x="0" y="4.8" width="8" height="0.9" fill="#9e9c9a"/><rect x="2.5" y="7.199999999999999" width="5.5" height="0.9" fill="#9e9c9a"/></svg>
<svg style="left:407px;top:150px;" width="8" height="9.6" viewBox="0 0 8 9.6"><rect x="0" y="0.0" width="8" height="0.9" fill="#9e9c9a"/><rect x="0" y="2.4" width="8" height="0.9" fill="#9e9c9a"/><rect x="0" y="4.8" width="8" height="0.9" fill="#9e9c9a"/><rect x="0" y="7.199999999999999" width="8" height="0.9" fill="#9e9c9a"/></svg>
<div class="a" style="left:419px;top:148px;width:0.7px;height:12px;background:#dad8d6;"></div>
<svg style="left:423px;top:150px;" width="8" height="6" viewBox="0 0 8 6"><rect x="0" y="0" width="3" height="6" fill="#c8c6c4"/><rect x="5" y="0" width="3" height="6" fill="#c8c6c4"/></svg>
<svg style="left:434px;top:152px;" width="4" height="3" viewBox="0 0 4 3"><path d="M0.3 0.5L2 2.2L3.7 0.5" stroke="#aaa" stroke-width="0.7" fill="none"/></svg>
<div class="t " style="left:409.50px;top:168.86px;font-size:6.274px;color:#555555;font-weight:normal;font-family:'Liberation Sans';transform:scaleX(0.9091);transform-origin:0 0;">Абзац</div>
<svg style="left:473.5px;top:168.5px;" width="5" height="5" viewBox="0 0 5 5"><path d="M0.5 0.5H4.5V4.5H0.5Z M2 2L4.3 4.3" stroke="#a3a19f" stroke-width="0.6" fill="none"/></svg>
<div class="a" style="left:484.4px;top:127.4px;width:63.3px;height:32.6px;background:#ffffff;"></div>
<div class="a" style="left:484.4px;top:127.4px;width:71px;height:32.6px;border:0.7px solid #e0dedc"></div>
<div class="a" style="left:548px;top:127.4px;width:0.7px;height:32.6px;background:#e0dedc;"></div>
<div class="a" style="left:548.5px;top:137.8px;width:7px;height:0.7px;background:#e0dedc;"></div>
<div class="a" style="left:548.5px;top:148.6px;width:7px;height:0.7px;background:#e0dedc;"></div>
<svg style="left:550px;top:131px;" width="4" height="3" viewBox="0 0 4 3"><path d="M0.3 2.5L2 0.8L3.7 2.5" stroke="#bbb" stroke-width="0.7" fill="none"/></svg>
<svg style="left:550px;top:142px;" width="4" height="3" viewBox="0 0 4 3"><path d="M0.3 0.5L2 2.2L3.7 0.5" stroke="#555" stroke-width="0.8" fill="none"/></svg>
<svg style="left:550px;top:152px;" width="4" height="4" viewBox="0 0 4 4"><path d="M0.3 0.5H3.7 M0.3 1.8L2 3.5L3.7 1.8" stroke="#555" stroke-width="0.7" fill="none"/></svg>
<svg style="left:486px;top:128.5px;" width="64" height="32" viewBox="0 0 64 32"><rect x="0.5" y="1" width="8" height="6.5" stroke="#2a7ad1" stroke-width="0.9" fill="#dbe9f8"/><path d="M2.5 6L4.5 2L6.5 6" stroke="#2a7ad1" stroke-width="0.7" fill="none"/><path d="M12 1L18 7 M22 1L28 7" stroke="#444" stroke-width="0.8"/><circle cx="28" cy="7" r="0.8" fill="#444"/><rect x="33" y="1.5" width="9" height="6" stroke="#444" stroke-width="0.8" fill="none"/><ellipse cx="48" cy="4.5" rx="4.5" ry="3" stroke="#444" stroke-width="0.8" fill="none"/><rect x="55" y="1.5" width="8" height="6" rx="1.5" stroke="#444" stroke-width="0.8" fill="none"/><path d="M1 19L5 12L9 19Z M12 12H15V19H18 M22 12H25V18H28 M33 14H37V12L41 15.5L37 19V17H33Z M46 12H50V16H52L48 20L44 16H46Z M55 12H62V17Q58 17 57 20H55Z" stroke="#444" stroke-width="0.8" fill="none"/><path d="M2 24Q6 22 5 27Q2 29 4 31Q7 31 8 29 M12 24Q17 24 18 31 M22 31L25 24L28 31 M35 23Q33 23 33 25V26L32 27L33 28V29Q33 31 35 31 M44 23Q46 23 46 25V26L47 27L46 28V29Q46 31 44 31 M58 23L59.3 26H62.5L60 28L61 31L58 29L55 31L56 28L53.5 26H56.7Z" stroke="#444" stroke-width="0.8" fill="none"/></svg>
<svg style="left:571px;top:128px;" width="17" height="16" viewBox="0 0 17 16"><rect x="0.5" y="0.5" width="8" height="8" stroke="#444" stroke-width="0.9" fill="#fff"/><rect x="4" y="4" width="8.5" height="8.5" fill="#f7c46c" stroke="#d89b2c" stroke-width="0.6"/><rect x="8" y="8" width="8" height="7.5" stroke="#444" stroke-width="0.9" fill="#fff"/></svg>
<div class="t " style="left:557.50px;top:146.99px;font-size:7.227px;color:#3a3a3a;font-weight:normal;font-family:'Liberation Sans';transform:scaleX(0.9091);transform-origin:0 0;">Упорядкувати</div>
<svg style="left:576.5px;top:156.8px;" width="5" height="3" viewBox="0 0 5 3"><path d="M0.5 0.5L2.5 2.5L4.5 0.5" stroke="#555" stroke-width="0.8" fill="none"/></svg>
<svg style="left:606.5px;top:127.5px;" width="16" height="16" viewBox="0 0 16 16"><rect x="0.5" y="0.5" width="14" height="14" rx="1.5" stroke="#bdbbb9" stroke-width="0.9" fill="#f6f5f4"/><path d="M7 13L13 7 M9 13L14 8" stroke="#b4b2b0" stroke-width="0.9"/></svg>
<div class="t " style="left:601.00px;top:146.98px;font-size:7.239px;color:#a9a7a5;font-weight:normal;font-family:'Liberation Sans';transform:scaleX(0.9091);transform-origin:0 0;">Експрес-</div>
<div class="t " style="left:605.00px;top:155.35px;font-size:7.105px;color:#a9a7a5;font-weight:normal;font-family:'Liberation Sans';transform:scaleX(0.9091);transform-origin:0 0;">стилі</div>
<svg style="left:622px;top:157.3px;" width="5" height="3" viewBox="0 0 5 3"><path d="M0.5 0.5L2.5 2.5L4.5 0.5" stroke="#b0aeac" stroke-width="0.8" fill="none"/></svg>
<svg style="left:631px;top:127.5px;" width="10" height="9" viewBox="0 0 10 9"><path d="M2 5L5 1.5L8 5L5 7.5Z" stroke="#a9a7a5" stroke-width="0.8" fill="none"/><rect x="0.5" y="8" width="9" height="1" fill="#b9b7b5"/></svg>
<div class="t " style="left:641.50px;top:128.34px;font-size:7.318px;color:#a9a7a5;font-weight:normal;font-family:'Liberation Sans';transform:scaleX(0.9091);transform-origin:0 0;">Заливка фігури</div>
<svg style="left:690px;top:130.5px;" width="4" height="3" viewBox="0 0 4 3"><path d="M0.3 0.5L2 2.2L3.7 0.5" stroke="#b0aeac" stroke-width="0.7" fill="none"/></svg>
<svg style="left:631px;top:140px;" width="10" height="9" viewBox="0 0 10 9"><path d="M1.5 7.5L7.5 1.5 M1 1H5 M1 1V6" stroke="#a9a7a5" stroke-width="0.8" fill="none"/><rect x="0.5" y="8" width="9" height="1" fill="#b9b7b5"/></svg>
<div class="t " style="left:641.50px;top:141.03px;font-size:7.535px;color:#a9a7a5;font-weight:normal;font-family:'Liberation Sans';transform:scaleX(0.9091);transform-origin:0 0;">Контур фігури</div>
<svg style="left:687px;top:143.3px;" width="4" height="3" viewBox="0 0 4 3"><path d="M0.3 0.5L2 2.2L3.7 0.5" stroke="#b0aeac" stroke-width="0.7" fill="none"/></svg>
<svg style="left:631px;top:152.5px;" width="10" height="8" viewBox="0 0 10 8"><ellipse cx="5" cy="4" rx="4.2" ry="3.2" stroke="#a9a7a5" stroke-width="0.8" fill="none"/><path d="M3 6L7 2" stroke="#a9a7a5" stroke-width="0.7"/></svg>
<div class="t " style="left:641.50px;top:153.49px;font-size:7.017px;color:#a9a7a5;font-weight:normal;font-family:'Liberation Sans';transform:scaleX(0.9091);transform-origin:0 0;">Ефекти для фігур</div>
<svg style="left:695px;top:155.5px;" width="4" height="3" viewBox="0 0 4 3"><path d="M0.3 0.5L2 2.2L3.7 0.5" stroke="#b0aeac" stroke-width="0.7" fill="none"/></svg>
<div class="t " style="left:571.50px;top:168.88px;font-size:6.250px;color:#555555;font-weight:normal;font-family:'Liberation Sans';transform:scaleX(0.9091);transform-origin:0 0;">Малювання</div>
<svg style="left:698.5px;top:168.5px;" width="5" height="5" viewBox="0 0 5 5"><path d="M0.5 0.5H4.5V4.5H0.5Z M2 2L4.3 4.3" stroke="#a3a19f" stroke-width="0.6" fill="none"/></svg>
<svg style="left:711px;top:127.8px;" width="10" height="9" viewBox="0 0 10 9"><circle cx="6" cy="3.5" r="2.8" stroke="#444" stroke-width="0.9" fill="none"/><path d="M4 5.5L0.8 8.5" stroke="#444" stroke-width="1"/></svg>
<div class="t " style="left:721.50px;top:128.57px;font-size:6.859px;color:#3a3a3a;font-weight:normal;font-family:'Liberation Sans';transform:scaleX(0.9091);transform-origin:0 0;">Знайти</div>
<svg style="left:710.5px;top:140px;" width="10" height="9.5" viewBox="0 0 10 9.5"><text x="4" y="4" font-size="5" fill="#b04fc8" font-family="Liberation Sans">b</text><text x="5" y="9" font-size="5" fill="#1d6fd0" font-family="Liberation Sans">c</text><path d="M2 2Q0.5 5 2.5 7.5" stroke="#1d6fd0" stroke-width="0.8" fill="none"/></svg>
<div class="t " style="left:721.50px;top:141.06px;font-size:7.076px;color:#3a3a3a;font-weight:normal;font-family:'Liberation Sans';transform:scaleX(0.9091);transform-origin:0 0;">Замінити</div>
<svg style="left:755px;top:143.3px;" width="4" height="3" viewBox="0 0 4 3"><path d="M0.3 0.5L2 2.2L3.7 0.5" stroke="#555" stroke-width="0.7" fill="none"/></svg>
<svg style="left:711.5px;top:152px;" width="8" height="9" viewBox="0 0 8 9"><path d="M1 0.5V8L3 6.2L4.5 8.5L5.6 8L4.4 5.6H7Z" stroke="#444" stroke-width="0.8" fill="none"/></svg>
<div class="t " style="left:721.50px;top:153.52px;font-size:6.957px;color:#3a3a3a;font-weight:normal;font-family:'Liberation Sans';transform:scaleX(0.9091);transform-origin:0 0;">Виділити</div>
<svg style="left:750px;top:155.4px;" width="4" height="3" viewBox="0 0 4 3"><path d="M0.3 0.5L2 2.2L3.7 0.5" stroke="#555" stroke-width="0.7" fill="none"/></svg>
<div class="t " style="left:714.00px;top:168.54px;font-size:6.917px;color:#555555;font-weight:normal;font-family:'Liberation Sans';transform:scaleX(0.9091);transform-origin:0 0;">Редагування</div>
<svg style="left:783.5px;top:127.5px;" width="12" height="17" viewBox="0 0 12 17"><rect x="3" y="0.5" width="6" height="11" rx="2" fill="#7fb7ee" stroke="#3f7fc4" stroke-width="0.7"/><path d="M1 8Q1 13 6 13Q11 13 11 8 M6 13V16 M3.5 16H8.5" stroke="#8a8886" stroke-width="0.8" fill="none"/></svg>
<div class="t " style="left:770.50px;top:146.61px;font-size:6.981px;color:#3a3a3a;font-weight:normal;font-family:'Liberation Sans';transform:scaleX(0.9091);transform-origin:0 0;">Надиктувати</div>
<svg style="left:787px;top:157.3px;" width="5" height="3" viewBox="0 0 5 3"><path d="M0.5 0.5L2.5 2.5L4.5 0.5" stroke="#555" stroke-width="0.8" fill="none"/></svg>
<div class="t " style="left:780.50px;top:168.48px;font-size:7.031px;color:#555555;font-weight:normal;font-family:'Liberation Sans';transform:scaleX(0.9091);transform-origin:0 0;">Голос</div>
<svg style="left:828.5px;top:126.8px;" width="18" height="15" viewBox="0 0 18 15"><rect x="4" y="4" width="13" height="10" stroke="#616161" stroke-width="1.1" fill="#fff"/><path d="M4 6.5H17 M12 6.5V14" stroke="#616161" stroke-width="0.9"/><path d="M5 0L1.5 5H4L2 9.5L7 3.5H4.5L6.5 0Z" fill="#f4a21b"/></svg>
<div class="t " style="left:826.00px;top:147.40px;font-size:6.398px;color:#3a3a3a;font-weight:normal;font-family:'Liberation Sans';transform:scaleX(0.9091);transform-origin:0 0;">Варіанти</div>
<div class="t " style="left:820.00px;top:155.58px;font-size:6.639px;color:#3a3a3a;font-weight:normal;font-family:'Liberation Sans';transform:scaleX(0.9091);transform-origin:0 0;">оформлення</div>
<div class="t " style="left:824.00px;top:168.62px;font-size:6.762px;color:#555555;font-weight:normal;font-family:'Liberation Sans';transform:scaleX(0.9091);transform-origin:0 0;">Дизайнер</div>
<svg style="left:888px;top:169.5px;" width="6" height="4" viewBox="0 0 6 4"><path d="M0.5 3.5L3 1L5.5 3.5" stroke="#555" stroke-width="0.8" fill="none"/></svg>
<div class="a" style="left:75px;top:175.4px;width:165px;height:340px;background:#e6e6e8;"></div>
<div class="t " style="left:77.90px;top:180.54px;font-size:8.523px;color:#404040;font-weight:normal;font-family:'Liberation Sans';transform:scaleX(0.8333);transform-origin:0 0;">15</div>
<div class="t " style="left:77.90px;top:262.44px;font-size:8.523px;color:#404040;font-weight:normal;font-family:'Liberation Sans';transform:scaleX(0.8333);transform-origin:0 0;">16</div>
<div class="t " style="left:77.90px;top:344.44px;font-size:8.523px;color:#d24a26;font-weight:normal;font-family:'Liberation Sans';transform:scaleX(0.8333);transform-origin:0 0;">17</div>
<div class="t " style="left:77.90px;top:426.54px;font-size:8.523px;color:#404040;font-weight:normal;font-family:'Liberation Sans';transform:scaleX(0.8333);transform-origin:0 0;">18</div>
<div class="a" style="left:93.6px;top:181.6px;width:126.8px;height:71.6px;background:#ffffff;box-shadow:0 0 0 0.6px #d6d6d8"></div>
<svg style="left:97.3px;top:183.79999999999998px;" width="7.4" height="5.6" viewBox="0 0 7.4 5.6"><rect width="7.4" height="5.6" fill="#22389a"/><circle cx="3.7" cy="2.8" r="1.68" stroke="#c8b84a" stroke-width="0.4" fill="none" stroke-dasharray="0.4 0.5"/></svg>
<div class="a" style="left:109.2px;top:184.6px;width:11px;height:0.8px;background:#7d8fc6;"></div>
<div class="a" style="left:106.2px;top:186.29999999999998px;width:14px;height:0.8px;background:#7d8fc6;"></div>
<div class="a" style="left:106.2px;top:188.0px;width:14px;height:0.8px;background:#7d8fc6;"></div>
<div class="a" style="left:201.6px;top:184.0px;width:5.2px;height:4.6px;background:#f47a1f;"></div>
<div class="a" style="left:204.79999999999998px;top:186.2px;width:3.8px;height:2.6px;background:#5a86c0;"></div>
<div class="a" style="left:202.1px;top:189.6px;width:5.5px;height:0.6px;background:#8aa2c4;"></div>
<svg style="left:211.3px;top:182.2px;" width="8" height="8" viewBox="0 0 8 8"><circle cx="4" cy="4" r="4" fill="#cdb63e"/><circle cx="4" cy="4" r="2.88" fill="#eadf9a"/><circle cx="4" cy="4" r="1.4" fill="#b9a75a"/></svg>
<div class="a" style="left:97.3px;top:190.79999999999998px;width:74.5px;height:58.7px;background:#fbeee8;"></div>
<div class="a" style="left:120.6px;top:191.4px;width:26px;height:0.9px;background:#555;"></div>
<div class="a" style="left:101.1px;top:194.1px;width:11px;height:0.8px;background:#777;"></div>
<div class="a" style="left:101.6px;top:195.9px;width:10px;height:0.8px;background:#888;"></div>
<div class="a" style="left:102.1px;top:197.6px;width:9px;height:0.8px;background:#888;"></div>
<div class="a" style="left:117.1px;top:194.1px;width:11px;height:0.8px;background:#777;"></div>
<div class="a" style="left:117.6px;top:195.9px;width:10px;height:0.8px;background:#888;"></div>
<div class="a" style="left:118.1px;top:197.6px;width:9px;height:0.8px;background:#888;"></div>
<div class="a" style="left:132.1px;top:194.1px;width:11px;height:0.8px;background:#777;"></div>
<div class="a" style="left:132.6px;top:195.9px;width:10px;height:0.8px;background:#888;"></div>
<div class="a" style="left:133.1px;top:197.6px;width:9px;height:0.8px;background:#888;"></div>
<div class="a" style="left:147.1px;top:194.1px;width:11px;height:0.8px;background:#777;"></div>
<div class="a" style="left:147.6px;top:195.9px;width:10px;height:0.8px;background:#888;"></div>
<div class="a" style="left:148.1px;top:197.6px;width:9px;height:0.8px;background:#888;"></div>
<div class="a" style="left:159.1px;top:194.1px;width:11px;height:0.8px;background:#777;"></div>
<div class="a" style="left:159.6px;top:195.9px;width:10px;height:0.8px;background:#888;"></div>
<div class="a" style="left:160.1px;top:197.6px;width:9px;height:0.8px;background:#888;"></div>
<div class="a" style="left:101.6px;top:204.1px;width:10px;height:0.9px;background:#555;"></div>
<div class="a" style="left:101.6px;top:205.9px;width:10px;height:0.9px;background:#666;"></div>
<div class="a" style="left:117.6px;top:204.1px;width:10px;height:0.9px;background:#555;"></div>
<div class="a" style="left:132.6px;top:204.1px;width:10px;height:0.9px;background:#555;"></div>
<div class="a" style="left:147.6px;top:204.1px;width:10px;height:0.9px;background:#555;"></div>
<div class="a" style="left:163.79999999999998px;top:204.1px;width:1.6px;height:0.8px;background:#aaa;"></div>
<div class="a" style="left:101.6px;top:216.1px;width:10px;height:0.9px;background:#555;"></div>
<div class="a" style="left:101.6px;top:217.9px;width:10px;height:0.9px;background:#666;"></div>
<div class="a" style="left:117.6px;top:216.1px;width:10px;height:0.9px;background:#555;"></div>
<div class="a" style="left:132.6px;top:216.1px;width:10px;height:0.9px;background:#555;"></div>
<div class="a" style="left:147.6px;top:216.1px;width:10px;height:0.9px;background:#555;"></div>
<div class="a" style="left:159.6px;top:216.1px;width:10px;height:0.9px;background:#555;"></div>
<div class="a" style="left:101.6px;top:224.6px;width:10px;height:0.9px;background:#555;"></div>
<div class="a" style="left:101.6px;top:226.4px;width:10px;height:0.9px;background:#666;"></div>
<div class="a" style="left:121.8px;top:224.6px;width:1.6px;height:0.8px;background:#aaa;"></div>
<div class="a" style="left:132.6px;top:224.6px;width:10px;height:0.9px;background:#555;"></div>
<div class="a" style="left:147.6px;top:224.6px;width:10px;height:0.9px;background:#555;"></div>
<div class="a" style="left:159.6px;top:224.6px;width:10px;height:0.9px;background:#555;"></div>
<div class="a" style="left:101.6px;top:233.6px;width:10px;height:0.9px;background:#555;"></div>
<div class="a" style="left:101.6px;top:235.4px;width:10px;height:0.9px;background:#666;"></div>
<div class="a" style="left:121.8px;top:233.6px;width:1.6px;height:0.8px;background:#aaa;"></div>
<div class="a" style="left:132.6px;top:233.6px;width:10px;height:0.9px;background:#555;"></div>
<div class="a" style="left:147.6px;top:233.6px;width:10px;height:0.9px;background:#555;"></div>
<div class="a" style="left:159.6px;top:233.6px;width:10px;height:0.9px;background:#555;"></div>
<div class="a" style="left:101.6px;top:243.1px;width:10px;height:0.9px;background:#555;"></div>
<div class="a" style="left:117.6px;top:243.1px;width:10px;height:0.9px;background:#555;"></div>
<div class="a" style="left:132.6px;top:243.1px;width:10px;height:0.9px;background:#555;"></div>
<div class="a" style="left:147.6px;top:243.1px;width:10px;height:0.9px;background:#555;"></div>
<div class="a" style="left:159.6px;top:243.1px;width:10px;height:0.9px;background:#555;"></div>
<div class="a" style="left:179.6px;top:196.1px;width:24px;height:1.1px;background:#444;"></div>
<div class="a" style="left:175.6px;top:200.6px;width:33px;height:0.7px;background:#b5b3b2;"></div>
<div class="a" style="left:175.6px;top:203.04999999999998px;width:28px;height:0.7px;background:#b5b3b2;"></div>
<div class="a" style="left:175.6px;top:205.5px;width:22px;height:0.7px;background:#b5b3b2;"></div>
<div class="a" style="left:175.6px;top:207.95px;width:28px;height:0.7px;background:#b5b3b2;"></div>
<div class="a" style="left:175.6px;top:210.4px;width:33px;height:0.7px;background:#b5b3b2;"></div>
<div class="a" style="left:175.6px;top:212.85px;width:22px;height:0.7px;background:#b5b3b2;"></div>
<div class="a" style="left:175.6px;top:215.29999999999998px;width:28px;height:0.7px;background:#b5b3b2;"></div>
<div class="a" style="left:175.6px;top:217.75px;width:33px;height:0.7px;background:#b5b3b2;"></div>
<div class="a" style="left:175.6px;top:220.2px;width:22px;height:0.7px;background:#b5b3b2;"></div>
<div class="a" style="left:175.6px;top:222.65px;width:33px;height:0.7px;background:#b5b3b2;"></div>
<div class="a" style="left:175.6px;top:225.1px;width:28px;height:0.7px;background:#b5b3b2;"></div>
<div class="a" style="left:175.6px;top:227.55px;width:22px;height:0.7px;background:#b5b3b2;"></div>
<div class="a" style="left:175.6px;top:230.0px;width:33px;height:0.7px;background:#b5b3b2;"></div>
<div class="a" style="left:175.6px;top:232.45px;width:28px;height:0.7px;background:#b5b3b2;"></div>
<div class="a" style="left:175.6px;top:234.9px;width:28px;height:0.7px;background:#b5b3b2;"></div>
<div class="a" style="left:175.6px;top:237.35px;width:33px;height:0.7px;background:#b5b3b2;"></div>
<div class="a" style="left:175.6px;top:239.8px;width:33px;height:0.7px;background:#b5b3b2;"></div>
<div class="a" style="left:175.6px;top:242.25px;width:22px;height:0.7px;background:#b5b3b2;"></div>
<div class="a" style="left:93.6px;top:263.6px;width:126.8px;height:71.6px;background:#ffffff;box-shadow:0 0 0 0.6px #d6d6d8"></div>
<svg style="left:97.3px;top:266.1px;" width="7.4" height="5.6" viewBox="0 0 7.4 5.6"><rect width="7.4" height="5.6" fill="#22389a"/><circle cx="3.7" cy="2.8" r="1.68" stroke="#c8b84a" stroke-width="0.4" fill="none" stroke-dasharray="0.4 0.5"/></svg>
<div class="a" style="left:109.2px;top:266.90000000000003px;width:16px;height:0.8px;background:#7d8fc6;"></div>
<div class="a" style="left:106.2px;top:268.6px;width:19px;height:0.8px;background:#7d8fc6;"></div>
<div class="a" style="left:106.2px;top:270.3px;width:19px;height:0.8px;background:#7d8fc6;"></div>
<div class="a" style="left:209.6px;top:266.1px;width:5.2px;height:4.6px;background:#f47a1f;"></div>
<div class="a" style="left:212.79999999999998px;top:268.3px;width:3.8px;height:2.6px;background:#5a86c0;"></div>
<div class="a" style="left:210.1px;top:271.70000000000005px;width:5.5px;height:0.6px;background:#8aa2c4;"></div>
<div class="a" style="left:98.8px;top:273.90000000000003px;width:34.3px;height:16px;background:linear-gradient(180deg,#5e4844 0%,#8a6f62 40%,#b9b4b8 60%,#6e5a60 100%);filter:blur(0.25px)"></div>
<div class="a" style="left:105.6px;top:281.6px;width:18px;height:4px;background:#d9d6d8;"></div>
<div class="a" style="left:98.8px;top:291.40000000000003px;width:34.3px;height:19.7px;background:#1f1f22;"></div>
<div class="a" style="left:104.6px;top:292.6px;width:18px;height:13.5px;background:#e9e6e2;"></div>
<div class="a" style="left:99.6px;top:307.6px;width:4px;height:3px;background:#6a6064;"></div>
<div class="a" style="left:105.1px;top:307.6px;width:4px;height:3px;background:#6a6064;"></div>
<div class="a" style="left:110.6px;top:307.6px;width:4px;height:3px;background:#6a6064;"></div>
<div class="a" style="left:116.1px;top:307.6px;width:4px;height:3px;background:#6a6064;"></div>
<div class="a" style="left:121.6px;top:307.6px;width:4px;height:3px;background:#6a6064;"></div>
<div class="a" style="left:127.1px;top:307.6px;width:4px;height:3px;background:#6a6064;"></div>
<div class="a" style="left:98.8px;top:312.1px;width:34.3px;height:15.3px;background:#222226;"></div>
<div class="a" style="left:101.6px;top:313.6px;width:4px;height:4.5px;background:#5a5250;"></div>
<div class="a" style="left:101.6px;top:320.1px;width:4px;height:4.5px;background:#5a5250;"></div>
<div class="a" style="left:107.39999999999999px;top:313.6px;width:4px;height:4.5px;background:#5a5250;"></div>
<div class="a" style="left:107.39999999999999px;top:320.1px;width:4px;height:4.5px;background:#5a5250;"></div>
<div class="a" style="left:113.19999999999999px;top:313.6px;width:4px;height:4.5px;background:#5a5250;"></div>
<div class="a" style="left:113.19999999999999px;top:320.1px;width:4px;height:4.5px;background:#5a5250;"></div>
<div class="a" style="left:119.0px;top:313.6px;width:4px;height:4.5px;background:#5a5250;"></div>
<div class="a" style="left:119.0px;top:320.1px;width:4px;height:4.5px;background:#5a5250;"></div>
<div class="a" style="left:124.8px;top:313.6px;width:4px;height:4.5px;background:#5a5250;"></div>
<div class="a" style="left:124.8px;top:320.1px;width:4px;height:4.5px;background:#5a5250;"></div>
<svg style="left:94.7px;top:327.0px;" width="7.6" height="7.6" viewBox="0 0 7.6 7.6"><circle cx="3.8" cy="3.8" r="3.8" fill="#cdb63e"/><circle cx="3.8" cy="3.8" r="2.7359999999999998" fill="#eadf9a"/><circle cx="3.8" cy="3.8" r="1.3299999999999998" fill="#b9a75a"/></svg>
<div class="a" style="left:149.1px;top:272.0px;width:49px;height:1.1px;background:#555;"></div>
<div class="a" style="left:141.6px;top:280.40000000000003px;width:72px;height:0.8px;background:#c9a89a;"></div>
<div class="a" style="left:149.1px;top:283.6px;width:57px;height:0.8px;background:#b8b4b4;"></div>
<div class="a" style="left:139.6px;top:287.70000000000005px;width:67.9px;height:0.8px;background:#a9a7a7;"></div>
<div class="a" style="left:139.6px;top:292.1px;width:40.900000000000006px;height:0.8px;background:#a9a7a7;"></div>
<div class="a" style="left:139.6px;top:296.50000000000006px;width:74.4px;height:0.8px;background:#a9a7a7;"></div>
<div class="a" style="left:139.6px;top:300.90000000000003px;width:46.3px;height:0.8px;background:#a9a7a7;"></div>
<div class="a" style="left:139.6px;top:305.30000000000007px;width:47px;height:0.8px;background:#a9a7a7;"></div>
<div class="a" style="left:139.6px;top:309.70000000000005px;width:65px;height:0.8px;background:#a9a7a7;"></div>
<div class="a" style="left:139.6px;top:314.1px;width:58.400000000000006px;height:0.8px;background:#a9a7a7;"></div>
<div class="a" style="left:139.6px;top:318.50000000000006px;width:63.8px;height:0.8px;background:#a9a7a7;"></div>
<div class="a" style="left:139.6px;top:322.90000000000003px;width:70px;height:0.8px;background:#a9a7a7;"></div>
<div class="a" style="left:92.6px;top:344.6px;width:128.8px;height:74px;border:1.8px solid #e8704a;background:#fff"></div>
<svg style="left:97.0px;top:348.1px;" width="7.6" height="6.3" viewBox="0 0 7.6 6.3"><rect width="7.6" height="6.3" fill="#22389a"/><circle cx="3.8" cy="3.15" r="1.89" stroke="#c8b84a" stroke-width="0.4" fill="none" stroke-dasharray="0.4 0.5"/></svg>
<div class="a" style="left:109.1px;top:348.90000000000003px;width:5px;height:0.8px;background:#7d8fc6;"></div>
<div class="a" style="left:106.1px;top:350.6px;width:8px;height:0.8px;background:#7d8fc6;"></div>
<div class="a" style="left:106.1px;top:352.3px;width:8px;height:0.8px;background:#7d8fc6;"></div>
<div class="a" style="left:209.1px;top:347.6px;width:5.2px;height:4.6px;background:#f47a1f;"></div>
<div class="a" style="left:212.29999999999998px;top:349.8px;width:3.8px;height:2.6px;background:#5a86c0;"></div>
<div class="a" style="left:209.6px;top:353.20000000000005px;width:5.5px;height:0.6px;background:#8aa2c4;"></div>
<div class="a" style="left:95.1px;top:358.8px;width:29.9px;height:25.5px;background:#ede5d8;"></div>
<div class="a" style="left:96.6px;top:361.1px;width:27px;height:20.5px;background:#5f9edc;"></div>
<div class="a" style="left:114.6px;top:362.1px;width:7px;height:5px;background:#1f2a7a;"></div>
<div class="a" style="left:106.1px;top:367.1px;width:8px;height:0.9px;background:#2a3350;"></div>
<div class="a" style="left:99.1px;top:369.70000000000005px;width:22px;height:0.9px;background:#2a3350;"></div>
<div class="a" style="left:101.1px;top:372.3px;width:18px;height:0.9px;background:#2a3350;"></div>
<div class="a" style="left:104.1px;top:374.90000000000003px;width:12px;height:0.9px;background:#2a3350;"></div>
<div class="a" style="left:107.6px;top:378.1px;width:4px;height:0.9px;background:#2a3350;"></div>
<div class="a" style="left:95.1px;top:387.5px;width:29.9px;height:20.1px;background:linear-gradient(90deg,#f3e5dc 0%,#d4aa94 35%,#9a8e8c 60%,#585b62 100%);filter:blur(0.25px)"></div>
<svg style="left:95.1px;top:387.5px;" width="29.9" height="20.1" viewBox="0 0 29.9 20.1"><path d="M20 20L29 3L30 3L30 20Z" fill="#25282e"/><path d="M0 12Q10 9 16 12L18 17Q8 18 0 19Z" fill="#c99883"/><path d="M5 20L14 15L21 15L21 20Z" fill="#d8dadd"/></svg>
<svg style="left:95.3px;top:409.70000000000005px;" width="7.0" height="7.0" viewBox="0 0 7.0 7.0"><circle cx="3.5" cy="3.5" r="3.5" fill="#cdb63e"/><circle cx="3.5" cy="3.5" r="2.52" fill="#eadf9a"/><circle cx="3.5" cy="3.5" r="1.2249999999999999" fill="#b9a75a"/></svg>
<div class="a" style="left:132.3px;top:356.20000000000005px;width:81.8px;height:1.1px;background:#555;"></div>
<div class="a" style="left:145.5px;top:359.0px;width:46.7px;height:1.1px;background:#555;"></div>
<div class="a" style="left:132.3px;top:362.1px;width:81.8px;height:0.8px;background:#a9a6a5;"></div>
<div class="a" style="left:132.3px;top:364.95000000000005px;width:81.8px;height:0.8px;background:#a9a6a5;"></div>
<div class="a" style="left:132.3px;top:367.8px;width:81.8px;height:0.8px;background:#a9a6a5;"></div>
<div class="a" style="left:132.3px;top:370.65000000000003px;width:81.8px;height:0.8px;background:#a9a6a5;"></div>
<div class="a" style="left:132.3px;top:373.5px;width:81.8px;height:0.8px;background:#a9a6a5;"></div>
<div class="a" style="left:132.3px;top:376.35px;width:81.8px;height:0.8px;background:#a9a6a5;"></div>
<div class="a" style="left:132.3px;top:379.20000000000005px;width:8.0px;height:0.8px;background:#a9a6a5;"></div>
<div class="a" style="left:132.3px;top:382.05px;width:81.8px;height:0.8px;background:#a9a6a5;"></div>
<div class="a" style="left:132.3px;top:384.90000000000003px;width:81.8px;height:0.8px;background:#a9a6a5;"></div>
<div class="a" style="left:132.3px;top:387.75px;width:27.299999999999997px;height:0.8px;background:#a9a6a5;"></div>
<div class="a" style="left:170.3px;top:390.6px;width:43.8px;height:0.8px;background:#a9a6a5;"></div>
<div class="a" style="left:132.3px;top:393.45000000000005px;width:20.299999999999997px;height:0.8px;background:#a9a6a5;"></div>
<div class="a" style="left:135.2px;top:396.3px;width:78.9px;height:0.8px;background:#a9a6a5;"></div>
<div class="a" style="left:135.2px;top:399.15000000000003px;width:23.4px;height:0.8px;background:#a9a6a5;"></div>
<div class="a" style="left:135.2px;top:402.0px;width:78.9px;height:0.8px;background:#a9a6a5;"></div>
<div class="a" style="left:135.2px;top:404.85px;width:44.99999999999999px;height:0.8px;background:#a9a6a5;"></div>
<div class="a" style="left:133.6px;top:390.6px;width:36.7px;height:1.0px;background:#444;"></div>
<div class="a" style="left:93.6px;top:427.6px;width:126.8px;height:71.6px;background:#ffffff;box-shadow:0 0 0 0.6px #d6d6d8"></div>
<svg style="left:96.1px;top:430.6px;" width="7" height="5.1" viewBox="0 0 7 5.1"><rect width="7" height="5.1" fill="#22389a"/><circle cx="3.5" cy="2.55" r="1.5299999999999998" stroke="#c8b84a" stroke-width="0.4" fill="none" stroke-dasharray="0.4 0.5"/></svg>
<div class="a" style="left:107.6px;top:431.40000000000003px;width:10.5px;height:0.8px;background:#7d8fc6;"></div>
<div class="a" style="left:104.6px;top:433.1px;width:13.5px;height:0.8px;background:#7d8fc6;"></div>
<div class="a" style="left:104.6px;top:434.8px;width:13.5px;height:0.8px;background:#7d8fc6;"></div>
<div class="a" style="left:206.8px;top:429.8px;width:5.2px;height:4.6px;background:#f47a1f;"></div>
<div class="a" style="left:210.0px;top:432.0px;width:3.8px;height:2.6px;background:#5a86c0;"></div>
<div class="a" style="left:207.3px;top:435.40000000000003px;width:5.5px;height:0.6px;background:#8aa2c4;"></div>
<div class="t " style="left:103.90px;top:442.80px;font-size:6.200px;color:#222;font-weight:bold;font-family:'Liberation Serif';font-style:italic;transform:scaleX(0.6177);transform-origin:0 0;">Питання до обговорення:</div>
<div class="t " style="left:103.00px;top:451.90px;font-size:5.600px;color:#2a2a2a;font-weight:normal;font-family:'Liberation Serif';transform:scaleX(0.6805);transform-origin:0 0;">✓модельна сучасна освітня програма;</div>
<div class="t " style="left:103.00px;top:456.55px;font-size:5.600px;color:#2a2a2a;font-weight:normal;font-family:'Liberation Serif';transform:scaleX(0.6702);transform-origin:0 0;">✓залучення стейкхолдерів і роботодавців;</div>
<div class="t " style="left:103.00px;top:461.20px;font-size:5.600px;color:#2a2a2a;font-weight:normal;font-family:'Liberation Serif';transform:scaleX(0.6585);transform-origin:0 0;">✓практичне підготовка;</div>
<div class="t " style="left:103.00px;top:465.85px;font-size:5.600px;color:#2a2a2a;font-weight:normal;font-family:'Liberation Serif';transform:scaleX(0.6769);transform-origin:0 0;">✓стандартизація змісту освіти</div>
<div class="t " style="left:103.00px;top:470.50px;font-size:5.600px;color:#2a2a2a;font-weight:normal;font-family:'Liberation Serif';transform:scaleX(0.6794);transform-origin:0 0;">  (професійні стандарти).</div>
<div class="t " style="left:137.00px;top:480.50px;font-size:6.800px;color:#111;font-weight:bold;font-family:'Liberation Serif';font-style:italic;transform:scaleX(0.6758);transform-origin:0 0;">Дякуємо за увагу!</div>
<svg style="left:152.7px;top:486.40000000000003px;" width="9.0" height="9.0" viewBox="0 0 9.0 9.0"><circle cx="4.5" cy="4.5" r="4.5" fill="#cdb63e"/><circle cx="4.5" cy="4.5" r="3.2399999999999998" fill="#eadf9a"/><circle cx="4.5" cy="4.5" r="1.575" fill="#b9a75a"/></svg>
<svg style="left:180px;top:440px;" width="42" height="42" viewBox="0 0 42 42"><defs><filter id="rb"><feGaussianBlur stdDeviation="0.45"/></filter></defs><g filter="url(#rb)"><path d="M9 5 L18 5.5 L16.5 8 Q22 10 21.5 14 Q20 18 15 20 Q25 22 38.7 27 L38.7 38 L3.4 38 Q3 26 10 20 Q16 16 16 13 Q15 10 12 9.5 L11 11 Z" fill="#7e7e7e"/><path d="M6 33 L26 26 L38.7 27 L38.7 38 L6 38Z" fill="#b4b4b4"/><path d="M8.0 38 L14.0 27" stroke="#333" stroke-width="0.8"/><path d="M11.2 38 L17.4 27" stroke="#333" stroke-width="0.8"/><path d="M14.4 38 L20.8 27" stroke="#333" stroke-width="0.8"/><path d="M17.6 38 L24.2 27" stroke="#333" stroke-width="0.8"/><path d="M20.8 38 L27.6 27" stroke="#333" stroke-width="0.8"/><path d="M24.0 38 L31.0 27" stroke="#333" stroke-width="0.8"/><path d="M27.200000000000003 38 L34.4 27" stroke="#333" stroke-width="0.8"/><path d="M30.400000000000002 38 L37.8 27" stroke="#333" stroke-width="0.8"/><path d="M33.6 38 L41.2 27" stroke="#333" stroke-width="0.8"/><path d="M4.5 29 L26 22.5 L27.5 25.5 L6 33 Z" fill="#e02a2a"/><path d="M4.5 29 L6 33 L6.5 38 L5 38Z" fill="#c81e1e"/></g></svg>
<div class="a" style="left:231px;top:177px;width:7.5px;height:336.6px;background:#dcdcde;"></div>
<div class="a" style="left:231.2px;top:177px;width:7px;height:6.8px;background:#ffffff;"></div>
<svg style="left:232.7px;top:179px;" width="4" height="3" viewBox="0 0 4 3"><path d="M0 2.5L2 0.5L4 2.5Z" fill="#555"/></svg>
<div class="a" style="left:231.2px;top:432.8px;width:7px;height:73px;background:#ffffff;"></div>
<div class="a" style="left:231.2px;top:507.2px;width:7px;height:6.6px;background:#ffffff;"></div>
<svg style="left:232.7px;top:509.2px;" width="4" height="3" viewBox="0 0 4 3"><path d="M0 0.5L2 2.5L4 0.5Z" fill="#555"/></svg>
<div class="a" style="left:240px;top:175.4px;width:659px;height:340px;background:#e6e6e8;"></div>
<div class="a" style="left:240.5px;top:175.4px;width:0.8px;height:340px;background:#d4d4d6;"></div>
<div class="a" style="left:302.8px;top:175.9px;width:526.5px;height:302px;background:#ffffff;"></div>
<div class="a" style="left:311px;top:175.9px;width:518.3px;height:5.9px;background:#e9e9eb;"></div>
<div class="a" style="left:311px;top:181.2px;width:518.3px;height:0.6px;background:#dcdcde;"></div>
<svg style="left:315px;top:189.4px;" width="33" height="25.5" viewBox="0 0 33 25.5"><rect width="33" height="25.5" fill="#1d3898"/><circle cx="16.50" cy="4.59" r="0.97" fill="#ffdd00"/><circle cx="20.58" cy="5.68" r="0.97" fill="#ffdd00"/><circle cx="23.57" cy="8.67" r="0.97" fill="#ffdd00"/><circle cx="24.66" cy="12.75" r="0.97" fill="#ffdd00"/><circle cx="23.57" cy="16.83" r="0.97" fill="#ffdd00"/><circle cx="20.58" cy="19.82" r="0.97" fill="#ffdd00"/><circle cx="16.50" cy="20.91" r="0.97" fill="#ffdd00"/><circle cx="12.42" cy="19.82" r="0.97" fill="#ffdd00"/><circle cx="9.43" cy="16.83" r="0.97" fill="#ffdd00"/><circle cx="8.34" cy="12.75" r="0.97" fill="#ffdd00"/><circle cx="9.43" cy="8.67" r="0.97" fill="#ffdd00"/><circle cx="12.42" cy="5.68" r="0.97" fill="#ffdd00"/></svg>
<div class="t " style="left:370.60px;top:189.39px;font-size:8.429px;color:#2c3d8a;font-weight:normal;font-family:'Liberation Sans';transform:scaleX(0.8475);transform-origin:0 0;">Co-funded by the</div>
<div class="t " style="left:354.00px;top:199.00px;font-size:8.399px;color:#2c3d8a;font-weight:normal;font-family:'Liberation Sans';transform:scaleX(0.8475);transform-origin:0 0;">Erasmus+ Programme</div>
<div class="t " style="left:354.00px;top:208.89px;font-size:8.419px;color:#2c3d8a;font-weight:normal;font-family:'Liberation Sans';transform:scaleX(0.8475);transform-origin:0 0;">of the European Union</div>
<div class="a" style="left:302.6px;top:234.4px;width:130.6px;height:109.5px;background:linear-gradient(180deg,#f6f3ee 0%,#f2ede5 50%,#f0e9df 100%)"></div>
<svg style="left:308px;top:243.4px;" width="122" height="93.2" viewBox="0 0 122 93.2"><defs><linearGradient id="sg" x1="0" y1="0" x2="0.3" y2="1"><stop offset="0" stop-color="#5596d8"/><stop offset="0.5" stop-color="#63a3de"/><stop offset="1" stop-color="#70ace2"/></linearGradient></defs><path d="M0.6 1.8L121.4 0.6V92.6H0.6Z" fill="url(#sg)" stroke="#1b2245" stroke-width="1.2"/></svg>
<svg style="left:398.6px;top:248.6px;" width="26.7" height="20.4" viewBox="0 0 26.7 20.4"><rect width="26.7" height="20.4" fill="#1e2a7c"/><circle cx="13.35" cy="3.67" r="0.78" fill="#ffdd00"/><circle cx="16.61" cy="4.55" r="0.78" fill="#ffdd00"/><circle cx="19.00" cy="6.94" r="0.78" fill="#ffdd00"/><circle cx="19.88" cy="10.20" r="0.78" fill="#ffdd00"/><circle cx="19.00" cy="13.46" r="0.78" fill="#ffdd00"/><circle cx="16.61" cy="15.85" r="0.78" fill="#ffdd00"/><circle cx="13.35" cy="16.73" r="0.78" fill="#ffdd00"/><circle cx="10.09" cy="15.85" r="0.78" fill="#ffdd00"/><circle cx="7.70" cy="13.46" r="0.78" fill="#ffdd00"/><circle cx="6.82" cy="10.20" r="0.78" fill="#ffdd00"/><circle cx="7.70" cy="6.94" r="0.78" fill="#ffdd00"/><circle cx="10.09" cy="4.55" r="0.78" fill="#ffdd00"/></svg>
<div class="t " style="left:350.80px;top:260.00px;font-size:11.000px;color:#1c1d2c;font-weight:bold;font-family:'Liberation Serif';transform:scaleX(0.8700);transform-origin:0 0;">ЦЕНТР</div>
<div class="t " style="left:312.00px;top:272.20px;font-size:11.000px;color:#1c1d2c;font-weight:bold;font-family:'Liberation Serif';transform:scaleX(0.8539);transform-origin:0 0;">ПРЕДМЕТНО-МОВНОГО</div>
<div class="t " style="left:327.40px;top:284.10px;font-size:11.000px;color:#1c1d2c;font-weight:bold;font-family:'Liberation Serif';transform:scaleX(0.8490);transform-origin:0 0;">ІНТЕГРОВАНОГО</div>
<div class="t " style="left:340.00px;top:296.30px;font-size:11.000px;color:#1c1d2c;font-weight:bold;font-family:'Liberation Serif';transform:scaleX(0.8701);transform-origin:0 0;">НАВЧАННЯ</div>
<div class="a" style="left:325.8px;top:315px;width:86.3px;height:0.9px;background:#1c1d2c;"></div>
<div class="t " style="left:358.00px;top:320.20px;font-size:11.000px;color:#1c1d2c;font-weight:bold;font-family:'Liberation Serif';transform:scaleX(0.8179);transform-origin:0 0;">CLIL</div>
<svg style="left:303.1px;top:355.1px;" width="129.6" height="87.7" viewBox="0 0 129.6 87.7"><defs><linearGradient id="lg1" x1="0" y1="0" x2="1" y2="0"><stop offset="0" stop-color="#f8f0ea"/><stop offset="0.2" stop-color="#ecb89e"/><stop offset="0.42" stop-color="#b98f80"/><stop offset="0.62" stop-color="#8c827e"/><stop offset="1" stop-color="#77797f"/></linearGradient><filter id="lb"><feGaussianBlur stdDeviation="2.2"/></filter><filter id="lb1"><feGaussianBlur stdDeviation="0.7"/></filter><clipPath id="lpc"><rect width="129.6" height="87.7"/></clipPath></defs><g clip-path="url(#lpc)"><rect width="129.6" height="87.7" fill="url(#lg1)"/><rect x="-6" y="-6" width="20" height="60" fill="#fdf9f5" filter="url(#lb)"/><rect x="26" y="-6" width="9" height="50" fill="#e07a58" filter="url(#lb)" opacity="0.6"/><rect x="60" y="50" width="75" height="40" fill="#d6d6d8" filter="url(#lb)"/><rect x="70" y="36" width="60" height="16" fill="#8e8a88" filter="url(#lb)" opacity="0.8"/><path d="M-3 42 Q10 38 28 46 L26 62 Q10 66 -3 66Z" fill="#f2ecea" filter="url(#lb1)"/><path d="M-3 62 Q16 52 38 45 Q58 40 72 46 Q80 52 78 62 Q72 70 58 74 Q34 82 -3 88Z" fill="#cf9f8a" filter="url(#lb1)"/><path d="M40 50 Q56 46 68 54 Q74 60 70 66 Q58 62 46 64Z" fill="#e2bcaa" filter="url(#lb1)" opacity="0.8"/><path d="M20 84 L62 68 L90 62 L92 88 L20 88Z" fill="#dfe2e6" filter="url(#lb1)"/><path d="M32 80 L64 70 L86 66 L88 78 L58 84Z" fill="#b8bcc2" filter="url(#lb1)" opacity="0.7"/><path d="M14 87 L90 84 L92 88 L14 88Z" fill="#3a3e46" filter="url(#lb1)"/><rect x="98" y="0" width="32" height="45" fill="#5a5e66" filter="url(#lb)" opacity="0.85"/><path d="M109.9 15.9 L129.6 10.9 L129.6 19.9 L93 87.7 L84 87.7 L80 76Z" fill="#23272e" filter="url(#lb1)"/><path d="M109.9 15.6 L129.6 10.4" stroke="#dfe2e8" stroke-width="1.6" filter="url(#lb1)"/><path d="M109.6 16.2 L82 78" stroke="#c9cdd3" stroke-width="1.4" filter="url(#lb1)"/><path d="M93.5 87.7 L129.6 20.5 L129.6 87.7Z" fill="#d3d3d5" filter="url(#lb1)"/><g stroke="#ffffff" stroke-width="0.7" fill="none" opacity="0.92"><circle cx="93" cy="19" r="19.5"/><circle cx="93" cy="19" r="16"/><circle cx="93" cy="19" r="12"/><path d="M85 14H101L98 22H88Z M89 25V26 M96 25V26"/><circle cx="16" cy="30" r="7"/><circle cx="45" cy="7" r="6"/><circle cx="38" cy="57" r="6.5"/><circle cx="12" cy="76" r="8.5"/><circle cx="116.5" cy="75.5" r="8"/><circle cx="52" cy="84" r="5"/></g><path d="M16 30L45 7 M45 7L93 19 M16 30L38 57 M38 57L93 19 M38 57L12 76 M93 19L116.5 75.5" stroke="#fff" stroke-width="0.5" opacity="0.45"/><rect x="111" y="72" width="10" height="6" fill="#fff" opacity="0.85"/><path d="M13 27 Q16 24 19 27 L19 34 L13 34Z" fill="#fff" opacity="0.85"/><circle cx="81" cy="56" r="3.6" fill="#fff" opacity="0.9"/></g></svg>
<svg style="left:369.5px;top:354px;" width="6" height="8" viewBox="0 0 6 8"><path d="M0.5 0.5V6.5L2 5.2L3.2 7.5L4.2 7L3 4.8H5Z" fill="#fff" stroke="#222" stroke-width="0.6"/></svg>
<svg style="left:304.5px;top:445.5px;" width="33" height="33" viewBox="0 0 33 33"><circle cx="16.5" cy="16.5" r="16.2" fill="#c9b040"/><circle cx="16.5" cy="16.5" r="14.2" fill="#ebdc92"/><circle cx="16.5" cy="16.5" r="12.2" fill="#f4eab0" stroke="#b59c30" stroke-width="0.6"/><circle cx="16.5" cy="17" r="10" fill="#f7d43a"/><path d="M12.22 15.61L7.46 14.06" stroke="#2d4fb0" stroke-width="1.3"/><path d="M12.86 14.35L8.81 11.42" stroke="#2d4fb0" stroke-width="1.3"/><path d="M13.85 13.36L10.92 9.31" stroke="#2d4fb0" stroke-width="1.3"/><path d="M15.11 12.72L13.56 7.96" stroke="#2d4fb0" stroke-width="1.3"/><path d="M16.50 12.50L16.50 7.50" stroke="#2d4fb0" stroke-width="1.3"/><path d="M17.89 12.72L19.44 7.96" stroke="#2d4fb0" stroke-width="1.3"/><path d="M19.15 13.36L22.08 9.31" stroke="#2d4fb0" stroke-width="1.3"/><path d="M20.14 14.35L24.19 11.42" stroke="#2d4fb0" stroke-width="1.3"/><path d="M20.78 15.61L25.54 14.06" stroke="#2d4fb0" stroke-width="1.3"/><circle cx="16.5" cy="18" r="4.2" fill="#f2b81e"/><path d="M9 22 Q16.5 27 24 22" stroke="#2d4fb0" stroke-width="1.6" fill="none"/></svg>
<div class="a" style="left:788.4px;top:186px;width:20.6px;height:18.7px;background:#f26a10;"></div>
<svg style="left:798px;top:194.5px;" width="22" height="11" viewBox="0 0 22 11"><path d="M2 10V3.2L6 8.2L10 3.2V10" stroke="#fff" stroke-width="1.6" fill="none" stroke-linejoin="miter"/><path d="M11.6 1.2H20.8V3H13.6V4.9H20V6.6H13.6V8.3H20.8V10.1H11.6Z" fill="#1d5aa6"/></svg>
<div class="t " style="left:790.50px;top:208.70px;font-size:2.600px;color:#9aabc4;font-weight:normal;font-family:'Liberation Sans';transform:scaleX(1.4413);transform-origin:0 0;">MULTILINGUAL</div>
<div class="t " style="left:793.00px;top:211.80px;font-size:2.800px;color:#1d4f96;font-weight:bold;font-family:'Liberation Sans';transform:scaleX(1.3993);transform-origin:0 0;">EDUCATION</div>
<div class="t " style="left:462.40px;top:217.46px;font-size:10.910px;color:#111;font-weight:bold;font-family:'Liberation Serif';">У межах проєкту MultiEd в МНУ створено Центр предметно-мовного</div>
<div class="t " style="left:555.60px;top:230.22px;font-size:10.956px;color:#111;font-weight:bold;font-family:'Liberation Serif';">інтегрованого навчання (CLIL)</div>
<div class="a" style="left:506px;top:228.3px;width:39px;height:0.8px;background:#e88a8a;"></div>
<div class="a" style="left:548px;top:228.3px;width:42px;height:0.8px;background:#e88a8a;"></div>
<div class="a" style="left:765.5px;top:228.3px;width:41.0px;height:0.8px;background:#e88a8a;"></div>
<div class="sb j" style="left:462.0px;top:243.86px;width:344.0px">Мета Центру  – забезпечення предметно-мовного інтегрованого навчання у</div>
<div class="sb j" style="left:462.0px;top:255.64px;width:344.0px">Миколаївській спеціалізованій школі  І-ІІІ ступенів мистецтв і прикладних</div>
<div class="sb j" style="left:462.0px;top:267.42px;width:344.0px">ремесел, сумісна розробка навчальної, наукової та методичної літератури, що</div>
<div class="sb j" style="left:462.0px;top:279.20px;width:344.0px">відповідає змісту навчання в середніх навчальних закладах, надання інформації,</div>
<div class="sb j" style="left:462.0px;top:290.98px;width:344.0px">спрямованої на підвищення  якості викладання англійської мови, надання</div>
<div class="sb j" style="left:462.0px;top:302.76px;width:344.0px">вчителями методичної допомоги  під час підготовки майбутніх учителів</div>
<div class="sb" style="left:462.0px;top:314.54px">іноземних мов.</div>
<div class="sb j" style="left:462.0px;top:326.32px;width:344.0px">На базі Центру проходять сумісні методичні семінари с залученням закордонних</div>
<div class="sb j" style="left:462.0px;top:338.10px;width:344.0px">фахівців з питань лінгвістики, літератури, країнознавства та методики</div>
<div class="sb" style="left:462.0px;top:349.88px">викладання англійської мови.</div>
<div class="sb" style="left:462.0px;top:373.44px">ЗВО», що передбачає:</div>
<div class="sb j" style="left:473.8px;top:385.22px;width:332.2px">формування науково-методичного середовища для вдосконалення професійної</div>
<div class="sb" style="left:473.8px;top:397.00px">компетентності вчителів;</div>
<div class="sb j" style="left:473.8px;top:408.78px;width:332.2px">забезпечення методичної підготовки майбутніх вчителів іноземних мов-</div>
<div class="sb" style="left:473.8px;top:420.56px;letter-spacing:0.1px">студентів факультету  на базі школи-партнера.</div>
<div class="sb j" style="left:466.4px;top:361.66px;width:339.6px"><b style="text-decoration:underline">Основним завданням Центру є: </b>проведення роботи з напрямку <u>«Школа -</u></div>
<div class="sb" style="left:462px;top:385.22px">-</div>
<div class="sb" style="left:462px;top:408.78px">-</div>
<div class="a" style="left:462px;top:253.6px;width:65px;height:0.7px;background:#333;"></div>
<div class="a" style="left:462px;top:383.6px;width:24.5px;height:0.7px;background:#333;"></div>
<div class="a" style="left:462px;top:277.2px;width:31px;height:0.8px;background:#e88a8a;"></div>
<div class="a" style="left:649.5px;top:253.3px;width:36.5px;height:0.8px;background:#e88a8a;"></div>
<div class="a" style="left:890.3px;top:175.4px;width:7.7px;height:281px;background:#dcdcde;"></div>
<div class="a" style="left:891.2px;top:177.4px;width:6.8px;height:6.6px;background:#ffffff;"></div>
<svg style="left:892.5px;top:179.3px;" width="4" height="3" viewBox="0 0 4 3"><path d="M0 2.5L2 0.5L4 2.5Z" fill="#555"/></svg>
<div class="a" style="left:890.8px;top:421.5px;width:7px;height:11.7px;background:#ffffff;"></div>
<div class="a" style="left:890.8px;top:448px;width:7px;height:6.8px;background:#ffffff;"></div>
<svg style="left:892.3px;top:450px;" width="4" height="3" viewBox="0 0 4 3"><path d="M0 0.5L2 2.5L4 0.5Z" fill="#555"/></svg>
<svg style="left:892px;top:457px;" width="5" height="12" viewBox="0 0 5 12"><path d="M0.5 2.5L2.5 0.5L4.5 2.5 M0.5 4.5L2.5 2.5L4.5 4.5 M0.5 7.5L2.5 9.5L4.5 7.5 M0.5 9.5L2.5 11.5L4.5 9.5" stroke="#666" stroke-width="0.6" fill="none"/></svg>
<div class="a" style="left:241px;top:484px;width:658px;height:0.8px;background:#d2d2d4;"></div>
<div class="t " style="left:247.20px;top:489.69px;font-size:8.422px;color:#555;font-weight:normal;font-family:'Liberation Sans';transform:scaleX(0.9091);transform-origin:0 0;">Нотатки до слайда</div>
<div class="a" style="left:75px;top:515.4px;width:824px;height:12.1px;background:#f4f1f0;"></div>
<div class="t " style="left:79.50px;top:518.27px;font-size:6.261px;color:#5a5a5a;font-weight:normal;font-family:'Liberation Sans';transform:scaleX(0.8696);transform-origin:0 0;">Слайд 17 з 18</div>
<svg style="left:126px;top:517.5px;" width="7" height="7" viewBox="0 0 7 7"><path d="M0.5 0.5H3V6.5H0.5Z M3.5 0.5H6.5V4.5 M4.5 5L6.8 6.8" stroke="#666" stroke-width="0.7" fill="none"/></svg>
<div class="t " style="left:141.50px;top:518.24px;font-size:6.315px;color:#5a5a5a;font-weight:normal;font-family:'Liberation Sans';transform:scaleX(0.8696);transform-origin:0 0;">українська</div>
<svg style="left:668.3px;top:517.2px;" width="8" height="7" viewBox="0 0 8 7"><path d="M0.5 3.5H7.5 M0.5 5.5H7.5 M2.5 3L4 0.8L5.5 3" stroke="#777" stroke-width="0.7" fill="none"/></svg>
<div class="t " style="left:677.50px;top:518.42px;font-size:5.960px;color:#5a5a5a;font-weight:normal;font-family:'Liberation Sans';transform:scaleX(0.9091);transform-origin:0 0;">Нотатки</div>
<div class="a" style="left:708px;top:515.5px;width:21.5px;height:11.5px;background:#dddbd9;"></div>
<svg style="left:713.5px;top:517.8px;" width="10" height="7" viewBox="0 0 10 7"><rect x="0.5" y="0.5" width="9" height="6" stroke="#555" stroke-width="0.8" fill="none"/><rect x="2.5" y="2" width="5" height="3" fill="#555"/></svg>
<svg style="left:735.5px;top:517.5px;" width="9" height="8" viewBox="0 0 9 8"><rect x="0.5" y="0.5" width="3" height="3" stroke="#666" stroke-width="0.7" fill="none"/><rect x="5.5" y="0.5" width="3" height="3" stroke="#666" stroke-width="0.7" fill="none"/><rect x="0.5" y="4.5" width="3" height="3" stroke="#666" stroke-width="0.7" fill="none"/><rect x="5.5" y="4.5" width="3" height="3" stroke="#666" stroke-width="0.7" fill="none"/></svg>
<svg style="left:756.5px;top:517.5px;" width="8" height="8" viewBox="0 0 8 8"><rect x="0.5" y="0.5" width="7" height="7" stroke="#666" stroke-width="0.7" fill="none"/><path d="M4 0.5V7.5 M1.5 2.5H3 M1.5 4.5H3" stroke="#666" stroke-width="0.6"/></svg>
<svg style="left:778.5px;top:517.5px;" width="9" height="8.5" viewBox="0 0 9 8.5"><path d="M0.5 0.5H8.5 M1.3 0.5V5H7.7V0.5 M4.5 5V8.2 M2.8 8.2H6.2" stroke="#666" stroke-width="0.7" fill="none"/></svg>
<div class="a" style="left:797px;top:521.2px;width:3.5px;height:0.6px;background:#777;"></div>
<div class="a" style="left:805px;top:521.3px;width:52px;height:0.5px;background:#aaa;"></div>
<div class="a" style="left:823px;top:518px;width:1.6px;height:6.5px;background:#555;"></div>
<div class="t " style="left:858.00px;top:517.90px;font-size:7.000px;color:#777;font-weight:normal;font-family:'Liberation Sans';">+</div>
<div class="t " style="left:870.00px;top:517.83px;font-size:7.144px;color:#5a5a5a;font-weight:normal;font-family:'Liberation Sans';transform:scaleX(0.9091);transform-origin:0 0;">77%</div>
<svg style="left:887px;top:516.5px;" width="9" height="9" viewBox="0 0 9 9"><circle cx="4.5" cy="4.5" r="2.6" stroke="#666" stroke-width="0.8" fill="none"/><path d="M4.5 0V2 M4.5 7V9 M0 4.5H2 M7 4.5H9" stroke="#666" stroke-width="0.8"/></svg>
<div class="a" style="left:0;top:527.5px;width:974px;height:20.5px;background:linear-gradient(90deg,#1e2327 0%,#1c2023 20%,#262b2e 36%,#2c3135 45%,#2e2f2b 58%,#2c3032 78%,#292b2a 100%)"></div>
<svg style="left:7.8px;top:534px;" width="9" height="9" viewBox="0 0 9 9"><rect x="0" y="0" width="4" height="4" fill="#fff"/><rect x="4.8" y="0" width="4.2" height="4" fill="#fff"/><rect x="0" y="4.8" width="4" height="4.2" fill="#fff"/><rect x="4.8" y="4.8" width="4.2" height="4.2" fill="#fff"/></svg>
<div class="a" style="left:24px;top:528px;width:146px;height:20px;background:#f0f0f0;"></div>
<svg style="left:30px;top:533.5px;" width="9" height="9" viewBox="0 0 9 9"><circle cx="5.5" cy="3.5" r="2.8" stroke="#333" stroke-width="0.9" fill="none"/><path d="M3.5 5.5L0.6 8.4" stroke="#333" stroke-width="1"/></svg>
<div class="t " style="left:44.50px;top:534.43px;font-size:8.535px;color:#333;font-weight:normal;font-family:'Liberation Sans';transform:scaleX(0.9091);transform-origin:0 0;">Поиск</div>
<svg style="left:130px;top:527.5px;" width="38" height="20.5" viewBox="0 0 38 20.5"><defs><filter id="pk"><feGaussianBlur stdDeviation="0.5"/></filter><clipPath id="pkc"><rect width="38" height="20.5"/></clipPath></defs><g filter="url(#pk)" clip-path="url(#pkc)"><ellipse cx="21" cy="14" rx="11" ry="8" fill="#e6dcd8"/><ellipse cx="4.5" cy="12.5" rx="4.5" ry="4" fill="#ee5a8c"/><ellipse cx="8" cy="18.5" rx="4.5" ry="3.2" fill="#f0508a"/><ellipse cx="10" cy="7.5" rx="4.5" ry="3.5" fill="#e9648f"/><ellipse cx="16.5" cy="4" rx="4.5" ry="3" fill="#f07aa0"/><ellipse cx="23.5" cy="3" rx="4" ry="2.6" fill="#d9699b"/><ellipse cx="29.5" cy="5" rx="3.8" ry="3" fill="#c45a9c"/><ellipse cx="33" cy="10.5" rx="3.5" ry="3.2" fill="#e7508a"/><ellipse cx="34" cy="16" rx="3.6" ry="3.5" fill="#f0407a"/><ellipse cx="25" cy="11" rx="2.4" ry="2" fill="#a978c0"/><ellipse cx="18" cy="9" rx="2" ry="1.6" fill="#f2a0b8"/></g></svg>
<svg style="left:177.5px;top:534.5px;" width="10" height="8" viewBox="0 0 10 8"><rect x="2.5" y="0.5" width="5" height="7" stroke="#ddd" stroke-width="0.9" fill="none"/><path d="M0.5 1V7 M9.5 1V7" stroke="#ddd" stroke-width="0.9"/></svg>
<svg style="left:202px;top:532.5px;" width="13" height="11" viewBox="0 0 13 11"><path d="M0 1.5H5L6 3H13V11H0Z" fill="#f2c54a"/><rect x="0" y="4" width="13" height="7" fill="#ffd867"/><rect x="3" y="6" width="7" height="3" fill="#3a84d6"/></svg>
<div class="a" style="left:198px;top:546.6px;width:20.5px;height:1.4px;background:#8ec8f2;"></div>
<svg style="left:226.5px;top:531.5px;" width="13.5" height="13.5" viewBox="0 0 13.5 13.5"><rect width="13.5" height="13.5" rx="1" fill="#f58a1f"/><path d="M9.5 4.5Q8.5 2.8 6.8 2.8Q3.6 2.8 3.6 6.5Q3.6 10 6.8 10Q9.4 10 9.6 7H6.8" stroke="#fff" stroke-width="1.3" fill="none"/></svg>
<svg style="left:252px;top:532px;" width="12.5" height="12.5" viewBox="0 0 12.5 12.5"><circle cx="6.25" cy="6.25" r="6.2" fill="#db4437"/><path d="M6.25 6.25L0.9 9.3A6.2 6.2 0 0 0 9.3 11.6Z" fill="#0f9d58"/><path d="M6.25 6.25L9.3 11.6A6.2 6.2 0 0 0 12.45 6.25 L6.25 6.25Z" fill="#ffcd40"/><path d="M6.25 6.25L12.45 6.25A6.2 6.2 0 0 0 11.6 3.1Z" fill="#ffcd40"/><circle cx="6.25" cy="6.25" r="2.9" fill="#fff"/><circle cx="6.25" cy="6.25" r="2.2" fill="#4285f4"/></svg>
<div class="a" style="left:247.6px;top:546.6px;width:20.4px;height:1.4px;background:#8ec8f2;"></div>
<svg style="left:277.5px;top:532.2px;" width="12" height="12" viewBox="0 0 12 12"><circle cx="6" cy="6" r="6" fill="#2ea6da"/><path d="M2.5 5.8L9.3 3.2L8.2 8.8L5.5 7L4.3 8.3L4.5 6.6L8.2 4.2L4 6.3Z" fill="#fff"/></svg>
<svg style="left:301.5px;top:532.2px;" width="13" height="12" viewBox="0 0 13 12"><rect x="4" y="0" width="9" height="12" rx="1" fill="#2b7cd3"/><rect x="4" y="4" width="9" height="4" fill="#185abd"/><rect x="0" y="2.5" width="8" height="7.5" rx="0.6" fill="#185abd"/><path d="M1.2 4.2L2.2 8.5L3.9 5.3L5.6 8.5L6.7 4.2" stroke="#fff" stroke-width="0.8" fill="none"/></svg>
<div class="a" style="left:297.6px;top:546.6px;width:20.4px;height:1.4px;background:#8ec8f2;"></div>
<svg style="left:327px;top:532px;" width="12.5" height="13" viewBox="0 0 12.5 13"><path d="M6.25 0.5Q12 0.5 12 6Q12 11 6.5 11L4.5 12.7V10.8Q0.5 10 0.5 6Q0.5 0.5 6.25 0.5Z" fill="#7d52c8"/><path d="M4 3.2Q3 4 3.7 5.7Q5 8 7.6 8.8Q8.8 9 9.2 8L8 7Q7.4 7.5 6.6 7Q5.4 6.2 5 5.2Q5.3 4.6 5.4 4.2Z" fill="#fff"/></svg>
<div class="a" style="left:345.7px;top:527.5px;width:23.7px;height:20.5px;background:#3b4148;"></div>
<svg style="left:351px;top:532px;" width="12.5" height="12.5" viewBox="0 0 12.5 12.5"><circle cx="6.25" cy="6.25" r="6.2" fill="#2d8cff"/></svg>
<div class="t " style="left:352.80px;top:535.16px;font-size:6.889px;color:#fff;font-weight:bold;font-family:'Liberation Sans';transform:scaleX(0.9091);transform-origin:0 0;">zm</div>
<div class="a" style="left:345.7px;top:546.6px;width:23.7px;height:1.4px;background:#8ec8f2;"></div>
<svg style="left:768.5px;top:532px;" width="14" height="11" viewBox="0 0 14 11"><path d="M0.5 5H9 M2 7.5H10 M1 10H8" stroke="#a8c4e6" stroke-width="1.1"/><circle cx="10" cy="3" r="2.8" fill="#e23a3a"/></svg>
<div class="t " style="left:786.00px;top:534.48px;font-size:7.435px;color:#f2f2f2;font-weight:normal;font-family:'Liberation Sans';transform:scaleX(0.9091);transform-origin:0 0;">11°C</div>
<div class="t " style="left:805.00px;top:534.14px;font-size:8.116px;color:#f2f2f2;font-weight:normal;font-family:'Liberation Sans';transform:scaleX(0.9091);transform-origin:0 0;">Windy</div>
<svg style="left:837px;top:535px;" width="6" height="4" viewBox="0 0 6 4"><path d="M0.5 3.5L3 1L5.5 3.5" stroke="#eee" stroke-width="0.9" fill="none"/></svg>
<svg style="left:849.5px;top:533px;" width="6" height="10" viewBox="0 0 6 10"><rect x="0.5" y="3" width="5" height="4" stroke="#ddd" stroke-width="0.8" fill="none"/><path d="M0.5 1H5.5 M3 7V9.5 M1 9.5H5" stroke="#ddd" stroke-width="0.8"/></svg>
<svg style="left:860px;top:534px;" width="10" height="9" viewBox="0 0 10 9"><rect x="2.5" y="0.5" width="7" height="5" stroke="#ddd" stroke-width="0.8" fill="none"/><rect x="0.5" y="2.5" width="4" height="5.5" stroke="#ddd" stroke-width="0.8" fill="#2b2f31"/></svg>
<svg style="left:874px;top:533px;" width="5" height="10" viewBox="0 0 5 10"><rect x="1" y="0" width="3" height="6.5" rx="1.5" fill="#ddd"/><path d="M0.3 4.8Q0.3 7.8 2.5 7.8Q4.7 7.8 4.7 4.8 M2.5 7.8V9.8" stroke="#ddd" stroke-width="0.7" fill="none"/></svg>
<svg style="left:885px;top:534px;" width="9" height="8" viewBox="0 0 9 8"><path d="M0.5 3H2L4.3 0.8V7.2L2 5H0.5Z" stroke="#ddd" stroke-width="0.7" fill="none"/><path d="M5.8 2.5Q6.6 4 5.8 5.5 M7.2 1.3Q8.6 4 7.2 6.7" stroke="#ddd" stroke-width="0.7" fill="none"/></svg>
<div class="t " style="left:899.00px;top:535.14px;font-size:6.128px;color:#f2f2f2;font-weight:normal;font-family:'Liberation Sans';transform:scaleX(0.9091);transform-origin:0 0;">УКР</div>
<div class="t " style="left:922.50px;top:530.30px;font-size:6.593px;color:#f2f2f2;font-weight:normal;font-family:'Liberation Sans';transform:scaleX(0.9091);transform-origin:0 0;">14:09</div>
<div class="t " style="left:917.00px;top:539.73px;font-size:5.934px;color:#f2f2f2;font-weight:normal;font-family:'Liberation Sans';transform:scaleX(0.9091);transform-origin:0 0;">17.10.2024</div>
<svg style="left:953px;top:533px;" width="8.5" height="9.5" viewBox="0 0 8.5 9.5"><path d="M0.5 0.5H8V7H4.5L2.8 9V7H0.5Z" stroke="#eee" stroke-width="0.8" fill="none"/></svg>
<div class="a" style="left:75px;top:175.2px;width:824px;height:1.3px;background:rgba(0,0,0,0.06);"></div>
</div>
</body></html>
